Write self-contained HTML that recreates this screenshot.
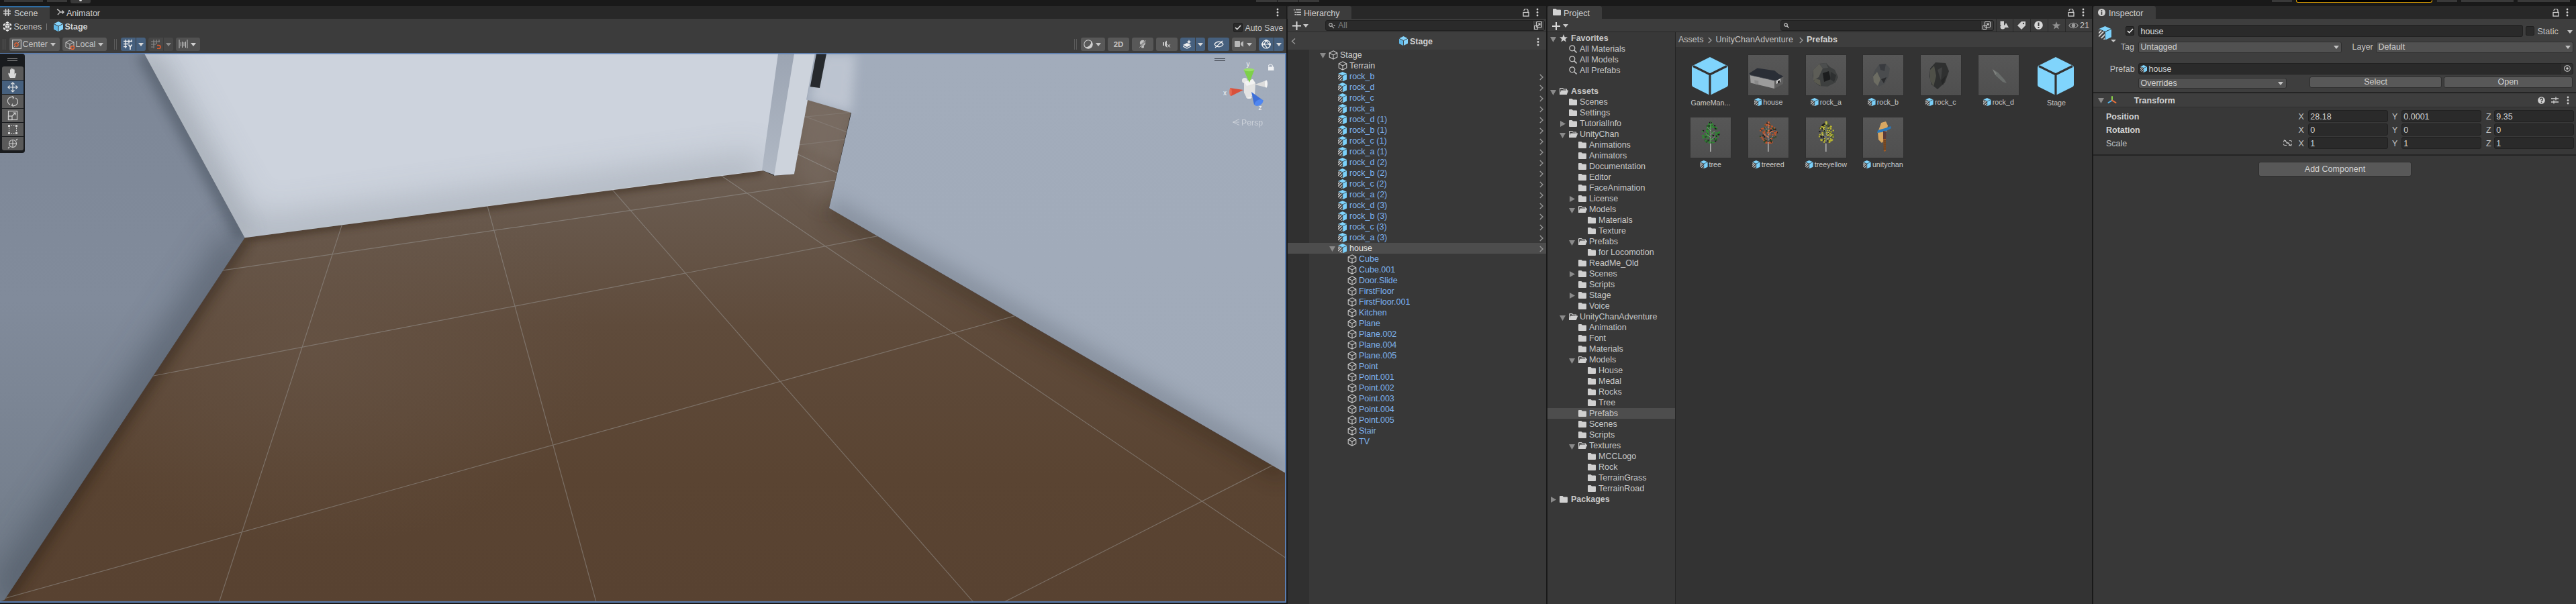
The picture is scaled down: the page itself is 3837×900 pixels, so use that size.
<!DOCTYPE html>
<html><head><meta charset="utf-8">
<style>
*{box-sizing:border-box;margin:0;padding:0}
html,body{width:3837px;height:900px;overflow:hidden;background:#191919;font-family:"Liberation Sans",sans-serif;font-size:12.5px;color:#c4c4c4}
.a{position:absolute}
.t{position:absolute;white-space:pre;line-height:16px}
.tabbar{position:absolute;top:9px;height:19px;background:#282828}
.tab{position:absolute;top:0;height:19px;background:#3c3c3c;border-radius:3px 3px 0 0}
.btn{position:absolute;background:#585858;border-radius:3px}
.field{position:absolute;background:#2a2a2a;border:1px solid #212121;border-radius:3px}
.pfb{color:#7eb6ff}
.dd{position:absolute;width:0;height:0;border-left:4px solid transparent;border-right:4px solid transparent;border-top:5px solid #c4c4c4}
</style></head><body>

<!-- top toolbar -->
<div class="a" style="left:0;top:0;width:3837px;height:9px;background:#191919"></div>
<div class="a" style="left:6px;top:0;width:58px;height:3px;background:#393939"></div>
<div class="a" style="left:70px;top:0;width:30px;height:3px;background:#393939"></div>
<div class="a" style="left:105px;top:0;width:30px;height:5px;background:#393939;border-radius:0 0 3px 3px"></div><div class="a" style="left:118px;top:0;width:4px;height:2px;background:#e8e8e8;border-radius:0 0 2px 2px"></div>
<div class="a" style="left:1871px;top:0;width:31px;height:3px;background:#393939"></div>
<div class="a" style="left:1903px;top:0;width:31px;height:3px;background:#393939"></div>
<div class="a" style="left:1935px;top:0;width:30px;height:3px;background:#393939"></div>
<div class="a" style="left:3384px;top:0;width:30px;height:3px;background:#393939"></div>
<div class="a" style="left:3420px;top:0;width:203px;height:4px;background:#000;border:1px solid #e0a000;border-top:none;border-radius:0 0 3px 3px"></div>
<div class="a" style="left:3630px;top:0;width:30px;height:3px;background:#393939"></div>
<div class="a" style="left:3666px;top:0;width:78px;height:3px;background:#393939"></div>
<div class="a" style="left:3750px;top:0;width:78px;height:3px;background:#393939"></div>

<!-- ============ SCENE PANEL ============ -->
<div class="a" style="left:0;top:9px;width:1916px;height:19px;background:#282828"></div>
<div class="a" style="left:0;top:28px;width:1916px;height:52px;background:#3c3c3c"></div>
<div class="a" style="left:0;top:9px;width:74px;height:19px;background:#3c3c3c;border-top:2px solid #2e6ca3"></div>
<svg class="a" style="left:5px;top:13px" width="11" height="11" viewBox="0 0 11 11" stroke="#d2d2d2" stroke-width="1.6"><path d="M3.5 0V11M7.5 0V11M0 3.5H11M0 7.5H11"/></svg>
<div class="t" style="left:21px;top:11.7px;color:#d2d2d2">Scene</div>
<svg class="a" style="left:84px;top:13px" width="12" height="10" viewBox="0 0 12 10" stroke="#c8c8c8" stroke-width="1.4" fill="none"><path d="M1 1C4 2 5 4 6 5H11M8.5 2.5L11 5L8.5 7.5M6 5C4.5 6 3.5 7 2 9"/></svg>
<div class="t" style="left:99px;top:11.7px;color:#d2d2d2">Animator</div>
<svg class="a" style="left:1901px;top:12px" width="4" height="13" viewBox="0 0 4 13" fill="#d2d2d2"><circle cx="2" cy="2" r="1.4"/><circle cx="2" cy="6.5" r="1.4"/><circle cx="2" cy="11" r="1.4"/></svg>
<!-- breadcrumb -->
<svg class="a" style="left:4px;top:32px" width="14" height="15" viewBox="0 0 14 15"><path fill="#ececec" d="M7 0L9.5 1.5L7 3L4.5 1.5Z M1 4L3.5 2.5V5.5L1 7Z M13 4L10.5 2.5V5.5L13 7Z M1 8.5L3.5 10V13L1 11.5Z M13 8.5L10.5 10V13L13 11.5Z M7 12L9.5 13.5L7 15L4.5 13.5Z"/><path fill="#ececec" d="M4.5 4.5L7 3.2L9.5 4.5L7 5.8Z M4 5.5L6.5 6.8V10L4 8.7Z M10 5.5L7.5 6.8V10L10 8.7Z"/><path fill="#ececec" d="M3.5 2.5L7 0.5L10.5 2.5L10.5 12.5L7 14.5L3.5 12.5Z" opacity="0.35"/></svg>
<div class="t" style="left:20.5px;top:28px;color:#c4c4c4;line-height:24px">Scenes</div>
<div class="a" style="left:69px;top:35px;width:1px;height:10px;background:#7a7a7a"></div>
<svg class="a" style="left:80px;top:32px" width="14" height="15" viewBox="0 0 14 15"><path fill="#86d4fb" d="M7 0L14 3.5V11.5L7 15L0 11.5V3.5Z"/><path fill="#5fb8e8" d="M0 3.5L7 7V15L0 11.5Z"/><path stroke="#3c3c3c" stroke-width="1" fill="none" d="M0 3.5L7 7L14 3.5M7 7V15"/></svg>
<div class="t" style="left:96.5px;top:28px;color:#d2d2d2;font-weight:bold;line-height:24px">Stage</div>
<div class="a" style="left:1837px;top:34px;width:14px;height:14px;background:#2a2a2a;border:1px solid #1f1f1f;border-radius:2px"></div>
<svg class="a" style="left:1839px;top:37px" width="10" height="8" viewBox="0 0 10 8" stroke="#e0e0e0" stroke-width="1.6" fill="none"><path d="M1 4L3.7 6.7L9 1"/></svg>
<div class="t" style="left:1854.5px;top:30px;color:#c4c4c4;line-height:24px;font-size:12.3px">Auto Save</div>
<!-- toolbar -->
<div class="a" style="left:4px;top:58px;width:1px;height:16px;background:#5a5a5a"></div>
<div class="a" style="left:7px;top:58px;width:1px;height:16px;background:#5a5a5a"></div>
<div class="btn" style="left:14px;top:56px;width:75px;height:20px"></div>
<svg class="a" style="left:18px;top:59px" width="14" height="14" viewBox="0 0 14 14"><rect x="0.6" y="0.6" width="12.8" height="12.8" fill="none" stroke="#c8c8c8" stroke-width="1.2"/><path d="M2 12L12 2" stroke="#c8c8c8" stroke-width="0.8"/><circle cx="6.5" cy="7.5" r="2.6" fill="#585858" stroke="#f06432" stroke-width="1.3"/></svg>
<div class="t" style="left:33.5px;top:58px;color:#c4c4c4">Center</div>
<div class="dd" style="left:75px;top:64px"></div>
<div class="btn" style="left:93px;top:56px;width:66px;height:20px"></div>
<svg class="a" style="left:97px;top:59px" width="15" height="15" viewBox="0 0 15 15" fill="none" stroke="#c8c8c8" stroke-width="1"><path d="M1 4L7 1L13 4V11L7 14L1 11Z M1 4L7 7L13 4M7 7V14"/><circle cx="11" cy="12" r="2.5" stroke="#f06432" stroke-width="1.4" fill="#585858"/></svg>
<div class="t" style="left:112.5px;top:58px;color:#c4c4c4">Local</div>
<div class="dd" style="left:146px;top:64px"></div>
<div class="a" style="left:170px;top:58px;width:1px;height:16px;background:#5a5a5a"></div>
<div class="a" style="left:173px;top:58px;width:1px;height:16px;background:#5a5a5a"></div>
<div class="btn" style="left:180px;top:56px;width:22px;height:20px;background:#46607e;border-radius:3px 0 0 3px"></div>
<div class="btn" style="left:203px;top:56px;width:14px;height:20px;background:#46607e;border-radius:0 3px 3px 0"></div>
<svg class="a" style="left:184px;top:59px" width="14" height="15" viewBox="0 0 14 15" stroke="#f0f0f0" stroke-width="1.3" fill="none"><path d="M3 0V13M8 0V6M12 0V3.5M0 2.5H13M0 6.5H7M0 10.5H5"/><path d="M7.5 7.5L10 11L12.5 7.5M10 11V15" stroke-width="1.6"/></svg>
<div class="dd" style="left:206px;top:64px;border-top-color:#d8d8d8"></div>
<div class="btn" style="left:221px;top:56px;width:22px;height:20px;background:#474747;border-radius:3px 0 0 3px"></div>
<div class="btn" style="left:244px;top:56px;width:14px;height:20px;background:#474747;border-radius:0 3px 3px 0"></div>
<svg class="a" style="left:225px;top:59px" width="15" height="14" viewBox="0 0 15 14" fill="none"><path d="M4 0V13M8 0V7M12 0V4M0 3H13M0 7H7M0 11H3" stroke="#8a8a8a" stroke-width="1.2"/><path d="M9 8.5H11.5A2.5 2.5 0 0 1 11.5 13.5H9" stroke="#e0592a" stroke-width="1.6"/></svg>
<div class="dd" style="left:247px;top:64px;border-top-color:#8a8a8a"></div>
<div class="btn" style="left:262px;top:56px;width:36px;height:20px;background:#515151"></div>
<svg class="a" style="left:266px;top:59px" width="14" height="14" viewBox="0 0 14 14" stroke="#d0d0d0" stroke-width="0.9"><path d="M1 0V13M13 0V13M3.5 4V10M5.5 3V12M8 4V10M10.5 3V12"/></svg>
<div class="dd" style="left:284px;top:64px;border-top-color:#d0d0d0"></div>

<div class="a" style="left:1600px;top:58px;width:1px;height:16px;background:#5a5a5a"></div>
<div class="a" style="left:1603px;top:58px;width:1px;height:16px;background:#5a5a5a"></div>
<div class="btn" style="left:1610px;top:56px;width:36px;height:20px"></div>
<svg class="a" style="left:1613.5px;top:59px" width="14" height="14" viewBox="0 0 14 14"><circle cx="7" cy="7" r="6.2" fill="none" stroke="#d0d0d0" stroke-width="1.1"/><path d="M11.4 2.6A6.2 6.2 0 0 1 2.6 11.4A8.5 8.5 0 0 0 11.4 2.6Z" fill="#d0d0d0"/></svg>
<div class="dd" style="left:1632px;top:64px"></div>
<div class="btn" style="left:1650px;top:56px;width:32px;height:20px"></div>
<div class="t" style="left:1650px;top:58px;width:32px;text-align:center;color:#c4c4c4;font-weight:bold;font-size:11.5px">2D</div>
<div class="btn" style="left:1686px;top:56px;width:32px;height:20px"></div>
<svg class="a" style="left:1696px;top:59px" width="12" height="14" viewBox="0 0 12 14"><circle cx="6" cy="5" r="4.2" fill="#c0c0c0"/><rect x="4" y="9" width="4" height="3.5" rx="1.5" fill="#c0c0c0"/><path d="M1 12L11 1" stroke="#585858" stroke-width="2"/><path d="M1.5 11.5L10.5 1.5" stroke="#c8c8c8" stroke-width="1"/></svg>
<div class="btn" style="left:1722px;top:56px;width:32px;height:20px"></div>
<svg class="a" style="left:1732px;top:60px" width="13" height="12" viewBox="0 0 13 12"><rect x="0" y="3" width="2" height="5" fill="#c8c8c8"/><path d="M3 3L6 0.5V10.5L3 8Z" fill="#c8c8c8"/><path d="M7 6L11 10.5M11 6L7 10.5" stroke="#c8c8c8" stroke-width="1.1"/></svg>
<div class="btn" style="left:1758px;top:56px;width:22px;height:20px;background:#46607e;border-radius:3px 0 0 3px"></div>
<div class="btn" style="left:1781px;top:56px;width:14px;height:20px;background:#46607e;border-radius:0 3px 3px 0"></div>
<svg class="a" style="left:1762px;top:59px" width="14" height="14" viewBox="0 0 14 14" fill="#f0f0f0"><path d="M0 8L6 5L12 8L6 11Z"/><path d="M0 10L6 13L12 10" stroke="#f0f0f0" stroke-width="1.3" fill="none"/><path d="M9 0L10 2.5L12.5 3.5L10 4.5L9 7L8 4.5L5.5 3.5L8 2.5Z"/></svg>
<div class="dd" style="left:1784px;top:64px;border-top-color:#d8d8d8"></div>
<div class="btn" style="left:1799px;top:56px;width:32px;height:20px;background:#46607e"></div>
<svg class="a" style="left:1808px;top:60px" width="15" height="12" viewBox="0 0 15 12" fill="none" stroke="#f0f0f0" stroke-width="1.3"><path d="M1 6C4 1 11 1 14 6C11 11 4 11 1 6Z"/><path d="M2 11L13 1"/></svg>
<div class="btn" style="left:1835px;top:56px;width:36px;height:20px"></div>
<svg class="a" style="left:1839px;top:60px" width="13" height="11" viewBox="0 0 13 11" fill="#b8b8b8"><rect x="0" y="1" width="8" height="9" rx="1"/><path d="M9 4L13 1V10L9 7Z"/></svg>
<div class="dd" style="left:1857px;top:64px"></div>
<div class="btn" style="left:1875px;top:56px;width:22px;height:20px;background:#46607e;border-radius:3px 0 0 3px"></div>
<div class="btn" style="left:1898px;top:56px;width:14px;height:20px;background:#46607e;border-radius:0 3px 3px 0"></div>
<svg class="a" style="left:1879px;top:59px" width="14" height="14" viewBox="0 0 14 14" fill="none" stroke="#f0f0f0" stroke-width="1.2"><circle cx="7" cy="7" r="6"/><path d="M1 7H13M7 1L4 7L9 13M7 1L11 7"/><circle cx="7" cy="1.5" r="1.3" fill="#f0f0f0"/><circle cx="1.5" cy="7" r="1.3" fill="#f0f0f0"/><circle cx="12.5" cy="7" r="1.3" fill="#f0f0f0"/></svg>
<div class="dd" style="left:1901px;top:64px;border-top-color:#d8d8d8"></div>
<svg class="a" style="left:0;top:0" width="1916" height="898" viewBox="0 0 1916 898">
<defs>
<clipPath id="sv"><rect x="0" y="80" width="1914" height="816"/></clipPath>
<clipPath id="cFloor"><polygon points="364.6,354.2 1134.9,253.6 1153,261.8 1183,259.5 1202,148.6 1267.4,167.4 1235,310 1914,704.6 1914,896 0,896 0,894 6.6,894"/></clipPath>
<clipPath id="cLW"><polygon points="0,80 215,80 364.6,354.2 6.6,894 0,896"/></clipPath>
<clipPath id="cBW"><polygon points="215,80 1159,80 1134.9,253.6 364.6,354.2"/></clipPath>
<clipPath id="cRW"><polygon points="1215.6,80 1914,80 1914,704.6 1235,310 1268,168 1202,148.6"/></clipPath>
<filter id="b8" x="-50%" y="-50%" width="200%" height="200%"><feGaussianBlur stdDeviation="8"/></filter>
<filter id="b14" x="-50%" y="-50%" width="200%" height="200%"><feGaussianBlur stdDeviation="14"/></filter>
<filter id="b25" x="-50%" y="-50%" width="200%" height="200%"><feGaussianBlur stdDeviation="25"/></filter>
<linearGradient id="gFloor" gradientUnits="userSpaceOnUse" x1="0" y1="150" x2="0" y2="896">
<stop offset="0" stop-color="#74675d"/><stop offset="0.2" stop-color="#695a4e"/><stop offset="0.45" stop-color="#5f4b3b"/><stop offset="0.75" stop-color="#5a4432"/><stop offset="1" stop-color="#584231"/>
</linearGradient>
<linearGradient id="gLW" gradientUnits="userSpaceOnUse" x1="0" y1="80" x2="0" y2="896">
<stop offset="0" stop-color="#7d8797"/><stop offset="0.45" stop-color="#818b9b"/><stop offset="1" stop-color="#707a87"/>
</linearGradient>
<linearGradient id="gRW" gradientUnits="userSpaceOnUse" x1="0" y1="80" x2="0" y2="697">
<stop offset="0" stop-color="#a2acbb"/><stop offset="1" stop-color="#a0aab9"/>
</linearGradient>
<linearGradient id="gPL" gradientUnits="userSpaceOnUse" x1="0" y1="80" x2="0" y2="262">
<stop offset="0" stop-color="#9ca5b3"/><stop offset="1" stop-color="#b0b8c4"/>
</linearGradient>
</defs>
<g clip-path="url(#sv)">
<polygon fill="url(#gFloor)" points="364.6,354.2 1134.9,253.6 1153,261.8 1183,259.5 1202,148.6 1267.4,167.4 1235,310 1914,704.6 1914,896 0,896 0,894 6.6,894"/>
<g clip-path="url(#cFloor)">
<polygon points="1202,148.6 1267.4,167.4 1235,310 1183,259.5" fill="#7a6d63" opacity="0.55" filter="url(#b14)"/>
<radialGradient id="gHi" gradientUnits="userSpaceOnUse" cx="470" cy="520" r="420" gradientTransform="translate(470 520) scale(1 0.7) translate(-470 -520)"><stop offset="0" stop-color="#6c5b4e" stop-opacity="0.45"/><stop offset="1" stop-color="#6c5b4e" stop-opacity="0"/></radialGradient><rect x="0" y="150" width="1000" height="746" fill="url(#gHi)"/>
<path d="M364.6,354.2 L6.6,894" stroke="#2e2218" stroke-width="22" opacity="0.45" filter="url(#b8)"/>
<filter id="b5" x="-50%" y="-50%" width="200%" height="200%"><feGaussianBlur stdDeviation="5"/></filter><path d="M364.6,354.2 L1134.9,253.6" stroke="#3a2a1e" stroke-width="14" opacity="0.5" filter="url(#b5)"/>
<path d="M1235,310 L1914,704.6" stroke="#2e2218" stroke-width="30" opacity="0.35" filter="url(#b14)"/>
<g stroke="#a8aaaa" stroke-width="1.2" fill="none" opacity="0.42">
<line x1="413.8" y1="196.2" x2="-4641.7" y2="5658.8"/>
<line x1="558.4" y1="184.5" x2="-187.9" y2="2477.0"/>
<line x1="689.4" y1="173.9" x2="1074.3" y2="1575.3"/>
<line x1="808.5" y1="164.3" x2="1670.6" y2="1149.3"/>
<line x1="917.4" y1="155.5" x2="2018.0" y2="901.1"/>
<line x1="1017.3" y1="147.4" x2="2245.5" y2="738.6"/>
<line x1="1109.3" y1="140.0" x2="2405.9" y2="624.0"/>
<line x1="1194.3" y1="133.1" x2="2525.1" y2="538.8"/>
<line x1="446.0" y1="209.6" x2="1266.3" y2="138.8"/>
<line x1="413.9" y1="252.8" x2="1341.6" y2="159.9"/>
<line x1="368.2" y1="314.0" x2="1437.2" y2="186.5"/>
<line x1="298.2" y1="407.9" x2="1562.5" y2="221.5"/>
<line x1="177.5" y1="569.9" x2="1733.9" y2="269.4"/>
<line x1="-80.8" y1="916.3" x2="1982.5" y2="338.8"/>
<line x1="-1022.6" y1="2179.5" x2="2376.0" y2="448.7"/>
</g>
<polygon points="1202,148.6 1267.4,167.4 1250,240 1190,215" fill="#7a6e65" opacity="0.55" filter="url(#b5)"/>
</g>
<polygon fill="url(#gLW)" points="0,80 215,80 364.6,354.2 6.6,894 0,896"/>
<g clip-path="url(#cLW)">
<path d="M215,80 L364.6,354.2" stroke="#3e4653" stroke-width="26" fill="none" opacity="0.45" filter="url(#b8)"/>
<path d="M364.6,354.2 L6.6,894" stroke="#3e4653" stroke-width="56" fill="none" opacity="0.5" filter="url(#b25)"/>
<path d="M0,80 L0,896" stroke="#5a6371" stroke-width="30" opacity="0.25" filter="url(#b14)"/>
</g>
<polygon fill="#cdd3dd" points="215,80 1162,80 1138,254 364.6,354.2"/>
<g clip-path="url(#cBW)">
<path d="M215,80 L364.6,354.2 L1134.9,253.6" stroke="#8c949f" stroke-width="50" fill="none" opacity="0.45" filter="url(#b25)"/><path d="M215,80 L364.6,354.2" stroke="#9aa0a9" stroke-width="24" fill="none" opacity="0.45" filter="url(#b14)"/>

</g>
<polygon fill="url(#gPL)" points="1159,80 1185,80 1155,261.6 1134.9,253.6"/>
<polygon fill="#cdd3dc" points="1183,80 1215.6,80 1183,259.5 1153,261.8"/>
<polygon fill="url(#gRW)" points="1213.6,80 1914,80 1914,704.6 1235,310 1268,168 1201,148.6"/>
<g clip-path="url(#cRW)">
<polygon points="1225,80 1275,80 1268,168 1205,150" fill="#c4cbd6" opacity="0.8" filter="url(#b8)"/>
<path d="M1235,310 L1914,704.6" stroke="#5e6774" stroke-width="34" fill="none" opacity="0.38" filter="url(#b14)"/>
</g>
<polygon fill="#26292d" points="1216,80 1231,80 1221,131 1206.8,129.3"/>
</g>
<rect x="0" y="79" width="1916" height="1.5" fill="#5a7db0"/>
<rect x="1914" y="79" width="2" height="819" fill="#5a7db0"/>
<rect x="0" y="896" width="1916" height="2" fill="#5a7db0"/>
</svg>

<!-- tool overlay -->
<div class="a" style="left:0;top:80px;width:37px;height:148px;background:#191b1e;border-radius:0 4px 4px 0"></div>
<div class="a" style="left:11px;top:87px;width:15px;height:1px;background:#8a8a8a"></div>
<div class="a" style="left:11px;top:90px;width:15px;height:1px;background:#8a8a8a"></div>
<div class="btn" style="left:3px;top:99px;width:32px;height:20px;background:#5a5a5a;border-radius:3px 3px 0 0"></div>
<div class="btn" style="left:3px;top:120px;width:32px;height:20px;background:#46607e;border-radius:0"></div>
<div class="btn" style="left:3px;top:141px;width:32px;height:20px;background:#5a5a5a;border-radius:0"></div>
<div class="btn" style="left:3px;top:162px;width:32px;height:20px;background:#5a5a5a;border-radius:0"></div>
<div class="btn" style="left:3px;top:183px;width:32px;height:20px;background:#5a5a5a;border-radius:0"></div>
<div class="btn" style="left:3px;top:204px;width:32px;height:20px;background:#5a5a5a;border-radius:0 0 3px 3px"></div>
<svg class="a" style="left:12px;top:101px" width="14" height="16" viewBox="0 0 14 16" fill="#d8d8d8"><path d="M3 15C1 12 0 9 0.5 8C1 7 2 7.5 2.5 8.5L3 9V3C3 2 4.5 2 4.5 3V7.5V1.5C4.5 0.5 6.3 0.5 6.3 1.5V7.5V2C6.3 1 8 1 8 2V7.5V3C8 2 9.7 2 9.7 3V10L10.5 8.5C11 7.5 12.5 7.8 12.3 9L10.5 15Z"/></svg>
<svg class="a" style="left:11px;top:122px" width="16" height="16" viewBox="0 0 16 16" fill="none" stroke="#e8e8e8" stroke-width="1.2"><path d="M8 1V15M1 8H15"/><path d="M5.5 3.5L8 1L10.5 3.5M5.5 12.5L8 15L10.5 12.5M3.5 5.5L1 8L3.5 10.5M12.5 5.5L15 8L12.5 10.5"/></svg>
<svg class="a" style="left:11px;top:143px" width="16" height="16" viewBox="0 0 16 16" fill="none" stroke="#d0d0d0" stroke-width="1.2"><path d="M4 13A6 6 0 0 1 9 2M12 3A6 6 0 0 1 7 14"/><path d="M7 0.5L9.5 2L8 4.5M9 15.5L6.5 14L8 11.5"/></svg>
<svg class="a" style="left:11px;top:164px" width="16" height="16" viewBox="0 0 16 16" fill="none" stroke="#d0d0d0" stroke-width="1.2"><rect x="1.5" y="1.5" width="13" height="13"/><rect x="1.5" y="9" width="5.5" height="5.5"/><path d="M7 9L12 4M8.5 4H12V7.5"/></svg>
<svg class="a" style="left:11px;top:185px" width="16" height="16" viewBox="0 0 16 16" fill="#d0d0d0"><rect x="1" y="1" width="3" height="3"/><rect x="12" y="1" width="3" height="3"/><rect x="1" y="12" width="3" height="3"/><rect x="12" y="12" width="3" height="3"/><path d="M2.5 5V11M13.5 5V11M5 2.5H11M5 13.5H11" stroke="#d0d0d0" stroke-width="1" stroke-dasharray="2 1.5"/></svg>
<svg class="a" style="left:11px;top:206px" width="16" height="16" viewBox="0 0 16 16" fill="none" stroke="#d0d0d0" stroke-width="1.1"><circle cx="8" cy="8" r="5.5"/><path d="M8 2V14M2 8H14"/><path d="M1 15L3 13M15 1L13 3" stroke-width="1.5"/></svg>
<!-- gizmo -->
<div class="a" style="left:1809px;top:87px;width:16px;height:1px;background:#3a3f48"></div>
<div class="a" style="left:1809px;top:90px;width:16px;height:1px;background:#3a3f48"></div>
<svg class="a" style="left:1816px;top:88px" width="90" height="105" viewBox="1816 88 90 105">
<path d="M1889.5 99A3 3 0 0 1 1895.5 99V100" fill="none" stroke="#eef0f3" stroke-width="1.2"/><rect x="1889" y="99.5" width="8.5" height="5.5" fill="#eef0f3"/>
<text x="1856.5" y="99" fill="#f4f4f4" font-size="10" font-family="Liberation Sans">y</text>
<text x="1822" y="141.5" fill="#f4f4f4" font-size="10" font-family="Liberation Sans">x</text>
<text x="1874.5" y="163.5" fill="#f4f4f4" font-size="10" font-family="Liberation Sans">z</text>
<ellipse cx="1854" cy="120" rx="4" ry="4" fill="#e6e6e6"/>
<path d="M1869 126L1887 119.5L1887 130.5Z" fill="#dcdcdc"/><ellipse cx="1886" cy="125" rx="2" ry="5.5" fill="#f4f4f4"/>
<path d="M1860 137L1857 146L1864 146Z" fill="#dcdcdc"/><ellipse cx="1860.5" cy="145" rx="4" ry="2" fill="#f0f0f0"/>
<path d="M1853 122L1866 118L1870 124L1869 142L1857 146L1853 138Z" fill="#e3e3e3"/>
<path d="M1853 122L1866 118L1870 124L1857 128Z" fill="#f2f2f2"/>
<path d="M1861 123L1852.5 104L1868.5 104Z" fill="#7ed04a"/><ellipse cx="1860.5" cy="104" rx="8" ry="2.2" fill="#9be06a"/>
<path d="M1852 134L1832 131L1834 143Z" fill="#d9503a"/><ellipse cx="1833" cy="137" rx="1.8" ry="6" fill="#e46a52"/>
<path d="M1864 137L1882 150L1868 156Z" fill="#3d6fd8"/><ellipse cx="1875" cy="153" rx="7" ry="4" transform="rotate(-30 1875 153)" fill="#4f86f0"/>
<text x="1849" y="186.5" fill="#d6dae0" opacity="0.8" font-size="12.3" font-family="Liberation Sans">Persp</text>
<path d="M1846 177.5L1836.5 182L1846 186.5M1836.5 182H1846" fill="none" stroke="#d6dae0" stroke-width="1" opacity="0.8"/>
</svg>

<!-- ============ HIERARCHY ============ -->
<div class="a" style="left:1917px;top:9px;width:386px;height:19px;background:#282828"></div>
<div class="a" style="left:1918px;top:9px;width:95px;height:19px;background:#3c3c3c;border-radius:3px 3px 0 0"></div>
<svg class="a" style="left:1927px;top:14px" width="11" height="9" viewBox="0 0 11 9" fill="#d2d2d2"><rect x="0" y="0" width="1.5" height="1.5"/><rect x="3" y="0" width="8" height="1.3"/><rect x="1.5" y="3.5" width="1.5" height="1.5"/><rect x="4" y="3.6" width="7" height="1.3"/><rect x="1.5" y="7" width="1.5" height="1.5"/><rect x="4" y="7.2" width="7" height="1.3"/></svg>
<div class="t" style="left:1942px;top:11.7px;color:#d2d2d2">Hierarchy</div>
<svg class="a" style="left:2268px;top:13px" width="10" height="12" viewBox="0 0 10 12" fill="none" stroke="#d2d2d2" stroke-width="1.3"><path d="M8 5V3A3 3 0 0 0 2 3"/><rect x="1" y="5.5" width="8" height="5.5"/></svg>
<svg class="a" style="left:2288px;top:12px" width="4" height="13" viewBox="0 0 4 13" fill="#d2d2d2"><circle cx="2" cy="2" r="1.4"/><circle cx="2" cy="6.5" r="1.4"/><circle cx="2" cy="11" r="1.4"/></svg>
<div class="a" style="left:1918px;top:28px;width:385px;height:20px;background:#3c3c3c"></div>
<div class="a" style="left:1918px;top:47px;width:385px;height:1px;background:#2a2a2a"></div>
<svg class="a" style="left:1925px;top:31.5px" width="13" height="13" viewBox="0 0 13 13" stroke="#d8d8d8" stroke-width="2"><path d="M6.5 0V13M0 6.5H13"/></svg>
<div class="dd" style="left:1941px;top:36px"></div>
<div class="a" style="left:1974px;top:30px;width:327px;height:16px;background:#2a2a2a;border:1px solid #212121;border-radius:3px"></div>
<svg class="a" style="left:1979px;top:34px" width="10" height="9" viewBox="0 0 10 9" fill="none" stroke="#b0b0b0" stroke-width="1.2"><circle cx="3" cy="3" r="2.3"/><path d="M4.8 4.8L8 8"/><path d="M7 3L10 3L8.5 5Z" fill="#b0b0b0" stroke="none"/></svg>
<div class="t" style="left:1993px;top:30px;color:#7d7d7d">All</div>
<div class="a" style="left:2282px;top:31px;width:18px;height:14px;background:#3a3a3a;border-left:1px solid #212121"></div>
<svg class="a" style="left:2285px;top:32px" width="12" height="12" viewBox="0 0 12 12" fill="none" stroke="#c8c8c8" stroke-width="1.1"><rect x="3.5" y="0.5" width="8" height="8" rx="1"/><rect x="0.5" y="6.5" width="5" height="5"/><path d="M5 7L9 3M6 3H9V6"/></svg>
<div class="a" style="left:1918px;top:48px;width:385px;height:26px;background:#3e3e3e"></div>
<svg class="a" style="left:1923px;top:57px" width="7" height="9" viewBox="0 0 7 9" fill="none" stroke="#9a9a9a" stroke-width="1.3"><path d="M6 0.5L1.5 4.5L6 8.5"/></svg>
<svg class="a" style="left:2084px;top:54px" width="13" height="14" viewBox="0 0 14 15"><path fill="#86d4fb" d="M7 0L14 3.5V11.5L7 15L0 11.5V3.5Z"/><path fill="#5fb8e8" d="M0 3.5L7 7V15L0 11.5Z"/><path stroke="#3e3e3e" stroke-width="1" fill="none" d="M0 3.5L7 7L14 3.5M7 7V15"/></svg>
<div class="t" style="left:2100px;top:54px;color:#d2d2d2;font-weight:bold">Stage</div>
<svg class="a" style="left:2289px;top:56px" width="4" height="13" viewBox="0 0 4 13" fill="#d2d2d2"><circle cx="2" cy="2" r="1.4"/><circle cx="2" cy="6.5" r="1.4"/><circle cx="2" cy="11" r="1.4"/></svg>
<svg width="0" height="0" style="position:absolute"><defs><clipPath id="pfLeft"><path d="M0 4.2L9.5 8.5V21L0 16.5Z"/></clipPath></defs></svg>
<div class="a" style="left:1918px;top:74px;width:385px;height:826px;background:#383838"></div>
<div class="a" style="left:1918px;top:74px;width:32px;height:826px;background:#303030"></div>

<svg class="a" style="left:1966px;top:79px" width="9" height="8" viewBox="0 0 9 8" fill="#8a8a8a"><path d="M0 0H9L4.5 8Z"/></svg>
<svg class="a" style="left:1979px;top:75px" width="14" height="14" viewBox="0 0 14 14" fill="none" stroke="#c8c8c8" stroke-width="1.1"><path d="M7 0.8L12.8 3.9V10.1L7 13.2L1.2 10.1V3.9Z M1.2 3.9L7 7L12.8 3.9M7 7V13.2"/></svg>
<div class="t" style="left:1996px;top:73.5px;color:#d2d2d2">Stage</div>
<svg class="a" style="left:1993px;top:91px" width="14" height="14" viewBox="0 0 14 14" fill="none" stroke="#c8c8c8" stroke-width="1.1"><path d="M7 0.8L12.8 3.9V10.1L7 13.2L1.2 10.1V3.9Z M1.2 3.9L7 7L12.8 3.9M7 7V13.2"/></svg>
<div class="t" style="left:2010px;top:89.5px;color:#d2d2d2">Terrain</div>
<svg class="a" style="left:1992.8px;top:106.8px" width="13.5" height="14.5" viewBox="0 0 19 21" preserveAspectRatio="none"><g clip-path="url(#pfLeft)" stroke="#cfcfcf" stroke-width="2"><path d="M-3 8.5L7 -1.5M-3 13.5L11 -0.5M-3 18.5L13 2.5M0 22L13 9M4 24L13 15"/></g><path d="M9.5 0L19 4.2L9.5 8.5L0 4.2Z" fill="#80d4fc"/><path d="M9.5 8.5L19 4.2V16.5L9.5 21Z" fill="#7bd0fa"/><path d="M0 4.2L9.5 8.5L19 4.2M9.5 8.5V21" stroke="#2a2a2a" stroke-width="0.9" fill="none"/></svg>
<div class="t" style="left:2010px;top:105.5px;color:#7eb4f2">rock_b</div>
<svg class="a" style="left:2293px;top:109.5px" width="6" height="10" viewBox="0 0 6 10" fill="none" stroke="#9a9a9a" stroke-width="1.3"><path d="M0.8 1L5 5L0.8 9"/></svg>
<svg class="a" style="left:1992.8px;top:122.8px" width="13.5" height="14.5" viewBox="0 0 19 21" preserveAspectRatio="none"><g clip-path="url(#pfLeft)" stroke="#cfcfcf" stroke-width="2"><path d="M-3 8.5L7 -1.5M-3 13.5L11 -0.5M-3 18.5L13 2.5M0 22L13 9M4 24L13 15"/></g><path d="M9.5 0L19 4.2L9.5 8.5L0 4.2Z" fill="#80d4fc"/><path d="M9.5 8.5L19 4.2V16.5L9.5 21Z" fill="#7bd0fa"/><path d="M0 4.2L9.5 8.5L19 4.2M9.5 8.5V21" stroke="#2a2a2a" stroke-width="0.9" fill="none"/></svg>
<div class="t" style="left:2010px;top:121.5px;color:#7eb4f2">rock_d</div>
<svg class="a" style="left:2293px;top:125.5px" width="6" height="10" viewBox="0 0 6 10" fill="none" stroke="#9a9a9a" stroke-width="1.3"><path d="M0.8 1L5 5L0.8 9"/></svg>
<svg class="a" style="left:1992.8px;top:138.8px" width="13.5" height="14.5" viewBox="0 0 19 21" preserveAspectRatio="none"><g clip-path="url(#pfLeft)" stroke="#cfcfcf" stroke-width="2"><path d="M-3 8.5L7 -1.5M-3 13.5L11 -0.5M-3 18.5L13 2.5M0 22L13 9M4 24L13 15"/></g><path d="M9.5 0L19 4.2L9.5 8.5L0 4.2Z" fill="#80d4fc"/><path d="M9.5 8.5L19 4.2V16.5L9.5 21Z" fill="#7bd0fa"/><path d="M0 4.2L9.5 8.5L19 4.2M9.5 8.5V21" stroke="#2a2a2a" stroke-width="0.9" fill="none"/></svg>
<div class="t" style="left:2010px;top:137.5px;color:#7eb4f2">rock_c</div>
<svg class="a" style="left:2293px;top:141.5px" width="6" height="10" viewBox="0 0 6 10" fill="none" stroke="#9a9a9a" stroke-width="1.3"><path d="M0.8 1L5 5L0.8 9"/></svg>
<svg class="a" style="left:1992.8px;top:154.8px" width="13.5" height="14.5" viewBox="0 0 19 21" preserveAspectRatio="none"><g clip-path="url(#pfLeft)" stroke="#cfcfcf" stroke-width="2"><path d="M-3 8.5L7 -1.5M-3 13.5L11 -0.5M-3 18.5L13 2.5M0 22L13 9M4 24L13 15"/></g><path d="M9.5 0L19 4.2L9.5 8.5L0 4.2Z" fill="#80d4fc"/><path d="M9.5 8.5L19 4.2V16.5L9.5 21Z" fill="#7bd0fa"/><path d="M0 4.2L9.5 8.5L19 4.2M9.5 8.5V21" stroke="#2a2a2a" stroke-width="0.9" fill="none"/></svg>
<div class="t" style="left:2010px;top:153.5px;color:#7eb4f2">rock_a</div>
<svg class="a" style="left:2293px;top:157.5px" width="6" height="10" viewBox="0 0 6 10" fill="none" stroke="#9a9a9a" stroke-width="1.3"><path d="M0.8 1L5 5L0.8 9"/></svg>
<svg class="a" style="left:1992.8px;top:170.8px" width="13.5" height="14.5" viewBox="0 0 19 21" preserveAspectRatio="none"><g clip-path="url(#pfLeft)" stroke="#cfcfcf" stroke-width="2"><path d="M-3 8.5L7 -1.5M-3 13.5L11 -0.5M-3 18.5L13 2.5M0 22L13 9M4 24L13 15"/></g><path d="M9.5 0L19 4.2L9.5 8.5L0 4.2Z" fill="#80d4fc"/><path d="M9.5 8.5L19 4.2V16.5L9.5 21Z" fill="#7bd0fa"/><path d="M0 4.2L9.5 8.5L19 4.2M9.5 8.5V21" stroke="#2a2a2a" stroke-width="0.9" fill="none"/></svg>
<div class="t" style="left:2010px;top:169.5px;color:#7eb4f2">rock_d (1)</div>
<svg class="a" style="left:2293px;top:173.5px" width="6" height="10" viewBox="0 0 6 10" fill="none" stroke="#9a9a9a" stroke-width="1.3"><path d="M0.8 1L5 5L0.8 9"/></svg>
<svg class="a" style="left:1992.8px;top:186.8px" width="13.5" height="14.5" viewBox="0 0 19 21" preserveAspectRatio="none"><g clip-path="url(#pfLeft)" stroke="#cfcfcf" stroke-width="2"><path d="M-3 8.5L7 -1.5M-3 13.5L11 -0.5M-3 18.5L13 2.5M0 22L13 9M4 24L13 15"/></g><path d="M9.5 0L19 4.2L9.5 8.5L0 4.2Z" fill="#80d4fc"/><path d="M9.5 8.5L19 4.2V16.5L9.5 21Z" fill="#7bd0fa"/><path d="M0 4.2L9.5 8.5L19 4.2M9.5 8.5V21" stroke="#2a2a2a" stroke-width="0.9" fill="none"/></svg>
<div class="t" style="left:2010px;top:185.5px;color:#7eb4f2">rock_b (1)</div>
<svg class="a" style="left:2293px;top:189.5px" width="6" height="10" viewBox="0 0 6 10" fill="none" stroke="#9a9a9a" stroke-width="1.3"><path d="M0.8 1L5 5L0.8 9"/></svg>
<svg class="a" style="left:1992.8px;top:202.8px" width="13.5" height="14.5" viewBox="0 0 19 21" preserveAspectRatio="none"><g clip-path="url(#pfLeft)" stroke="#cfcfcf" stroke-width="2"><path d="M-3 8.5L7 -1.5M-3 13.5L11 -0.5M-3 18.5L13 2.5M0 22L13 9M4 24L13 15"/></g><path d="M9.5 0L19 4.2L9.5 8.5L0 4.2Z" fill="#80d4fc"/><path d="M9.5 8.5L19 4.2V16.5L9.5 21Z" fill="#7bd0fa"/><path d="M0 4.2L9.5 8.5L19 4.2M9.5 8.5V21" stroke="#2a2a2a" stroke-width="0.9" fill="none"/></svg>
<div class="t" style="left:2010px;top:201.5px;color:#7eb4f2">rock_c (1)</div>
<svg class="a" style="left:2293px;top:205.5px" width="6" height="10" viewBox="0 0 6 10" fill="none" stroke="#9a9a9a" stroke-width="1.3"><path d="M0.8 1L5 5L0.8 9"/></svg>
<svg class="a" style="left:1992.8px;top:218.8px" width="13.5" height="14.5" viewBox="0 0 19 21" preserveAspectRatio="none"><g clip-path="url(#pfLeft)" stroke="#cfcfcf" stroke-width="2"><path d="M-3 8.5L7 -1.5M-3 13.5L11 -0.5M-3 18.5L13 2.5M0 22L13 9M4 24L13 15"/></g><path d="M9.5 0L19 4.2L9.5 8.5L0 4.2Z" fill="#80d4fc"/><path d="M9.5 8.5L19 4.2V16.5L9.5 21Z" fill="#7bd0fa"/><path d="M0 4.2L9.5 8.5L19 4.2M9.5 8.5V21" stroke="#2a2a2a" stroke-width="0.9" fill="none"/></svg>
<div class="t" style="left:2010px;top:217.5px;color:#7eb4f2">rock_a (1)</div>
<svg class="a" style="left:2293px;top:221.5px" width="6" height="10" viewBox="0 0 6 10" fill="none" stroke="#9a9a9a" stroke-width="1.3"><path d="M0.8 1L5 5L0.8 9"/></svg>
<svg class="a" style="left:1992.8px;top:234.8px" width="13.5" height="14.5" viewBox="0 0 19 21" preserveAspectRatio="none"><g clip-path="url(#pfLeft)" stroke="#cfcfcf" stroke-width="2"><path d="M-3 8.5L7 -1.5M-3 13.5L11 -0.5M-3 18.5L13 2.5M0 22L13 9M4 24L13 15"/></g><path d="M9.5 0L19 4.2L9.5 8.5L0 4.2Z" fill="#80d4fc"/><path d="M9.5 8.5L19 4.2V16.5L9.5 21Z" fill="#7bd0fa"/><path d="M0 4.2L9.5 8.5L19 4.2M9.5 8.5V21" stroke="#2a2a2a" stroke-width="0.9" fill="none"/></svg>
<div class="t" style="left:2010px;top:233.5px;color:#7eb4f2">rock_d (2)</div>
<svg class="a" style="left:2293px;top:237.5px" width="6" height="10" viewBox="0 0 6 10" fill="none" stroke="#9a9a9a" stroke-width="1.3"><path d="M0.8 1L5 5L0.8 9"/></svg>
<svg class="a" style="left:1992.8px;top:250.8px" width="13.5" height="14.5" viewBox="0 0 19 21" preserveAspectRatio="none"><g clip-path="url(#pfLeft)" stroke="#cfcfcf" stroke-width="2"><path d="M-3 8.5L7 -1.5M-3 13.5L11 -0.5M-3 18.5L13 2.5M0 22L13 9M4 24L13 15"/></g><path d="M9.5 0L19 4.2L9.5 8.5L0 4.2Z" fill="#80d4fc"/><path d="M9.5 8.5L19 4.2V16.5L9.5 21Z" fill="#7bd0fa"/><path d="M0 4.2L9.5 8.5L19 4.2M9.5 8.5V21" stroke="#2a2a2a" stroke-width="0.9" fill="none"/></svg>
<div class="t" style="left:2010px;top:249.5px;color:#7eb4f2">rock_b (2)</div>
<svg class="a" style="left:2293px;top:253.5px" width="6" height="10" viewBox="0 0 6 10" fill="none" stroke="#9a9a9a" stroke-width="1.3"><path d="M0.8 1L5 5L0.8 9"/></svg>
<svg class="a" style="left:1992.8px;top:266.8px" width="13.5" height="14.5" viewBox="0 0 19 21" preserveAspectRatio="none"><g clip-path="url(#pfLeft)" stroke="#cfcfcf" stroke-width="2"><path d="M-3 8.5L7 -1.5M-3 13.5L11 -0.5M-3 18.5L13 2.5M0 22L13 9M4 24L13 15"/></g><path d="M9.5 0L19 4.2L9.5 8.5L0 4.2Z" fill="#80d4fc"/><path d="M9.5 8.5L19 4.2V16.5L9.5 21Z" fill="#7bd0fa"/><path d="M0 4.2L9.5 8.5L19 4.2M9.5 8.5V21" stroke="#2a2a2a" stroke-width="0.9" fill="none"/></svg>
<div class="t" style="left:2010px;top:265.5px;color:#7eb4f2">rock_c (2)</div>
<svg class="a" style="left:2293px;top:269.5px" width="6" height="10" viewBox="0 0 6 10" fill="none" stroke="#9a9a9a" stroke-width="1.3"><path d="M0.8 1L5 5L0.8 9"/></svg>
<svg class="a" style="left:1992.8px;top:282.8px" width="13.5" height="14.5" viewBox="0 0 19 21" preserveAspectRatio="none"><g clip-path="url(#pfLeft)" stroke="#cfcfcf" stroke-width="2"><path d="M-3 8.5L7 -1.5M-3 13.5L11 -0.5M-3 18.5L13 2.5M0 22L13 9M4 24L13 15"/></g><path d="M9.5 0L19 4.2L9.5 8.5L0 4.2Z" fill="#80d4fc"/><path d="M9.5 8.5L19 4.2V16.5L9.5 21Z" fill="#7bd0fa"/><path d="M0 4.2L9.5 8.5L19 4.2M9.5 8.5V21" stroke="#2a2a2a" stroke-width="0.9" fill="none"/></svg>
<div class="t" style="left:2010px;top:281.5px;color:#7eb4f2">rock_a (2)</div>
<svg class="a" style="left:2293px;top:285.5px" width="6" height="10" viewBox="0 0 6 10" fill="none" stroke="#9a9a9a" stroke-width="1.3"><path d="M0.8 1L5 5L0.8 9"/></svg>
<svg class="a" style="left:1992.8px;top:298.8px" width="13.5" height="14.5" viewBox="0 0 19 21" preserveAspectRatio="none"><g clip-path="url(#pfLeft)" stroke="#cfcfcf" stroke-width="2"><path d="M-3 8.5L7 -1.5M-3 13.5L11 -0.5M-3 18.5L13 2.5M0 22L13 9M4 24L13 15"/></g><path d="M9.5 0L19 4.2L9.5 8.5L0 4.2Z" fill="#80d4fc"/><path d="M9.5 8.5L19 4.2V16.5L9.5 21Z" fill="#7bd0fa"/><path d="M0 4.2L9.5 8.5L19 4.2M9.5 8.5V21" stroke="#2a2a2a" stroke-width="0.9" fill="none"/></svg>
<div class="t" style="left:2010px;top:297.5px;color:#7eb4f2">rock_d (3)</div>
<svg class="a" style="left:2293px;top:301.5px" width="6" height="10" viewBox="0 0 6 10" fill="none" stroke="#9a9a9a" stroke-width="1.3"><path d="M0.8 1L5 5L0.8 9"/></svg>
<svg class="a" style="left:1992.8px;top:314.8px" width="13.5" height="14.5" viewBox="0 0 19 21" preserveAspectRatio="none"><g clip-path="url(#pfLeft)" stroke="#cfcfcf" stroke-width="2"><path d="M-3 8.5L7 -1.5M-3 13.5L11 -0.5M-3 18.5L13 2.5M0 22L13 9M4 24L13 15"/></g><path d="M9.5 0L19 4.2L9.5 8.5L0 4.2Z" fill="#80d4fc"/><path d="M9.5 8.5L19 4.2V16.5L9.5 21Z" fill="#7bd0fa"/><path d="M0 4.2L9.5 8.5L19 4.2M9.5 8.5V21" stroke="#2a2a2a" stroke-width="0.9" fill="none"/></svg>
<div class="t" style="left:2010px;top:313.5px;color:#7eb4f2">rock_b (3)</div>
<svg class="a" style="left:2293px;top:317.5px" width="6" height="10" viewBox="0 0 6 10" fill="none" stroke="#9a9a9a" stroke-width="1.3"><path d="M0.8 1L5 5L0.8 9"/></svg>
<svg class="a" style="left:1992.8px;top:330.8px" width="13.5" height="14.5" viewBox="0 0 19 21" preserveAspectRatio="none"><g clip-path="url(#pfLeft)" stroke="#cfcfcf" stroke-width="2"><path d="M-3 8.5L7 -1.5M-3 13.5L11 -0.5M-3 18.5L13 2.5M0 22L13 9M4 24L13 15"/></g><path d="M9.5 0L19 4.2L9.5 8.5L0 4.2Z" fill="#80d4fc"/><path d="M9.5 8.5L19 4.2V16.5L9.5 21Z" fill="#7bd0fa"/><path d="M0 4.2L9.5 8.5L19 4.2M9.5 8.5V21" stroke="#2a2a2a" stroke-width="0.9" fill="none"/></svg>
<div class="t" style="left:2010px;top:329.5px;color:#7eb4f2">rock_c (3)</div>
<svg class="a" style="left:2293px;top:333.5px" width="6" height="10" viewBox="0 0 6 10" fill="none" stroke="#9a9a9a" stroke-width="1.3"><path d="M0.8 1L5 5L0.8 9"/></svg>
<svg class="a" style="left:1992.8px;top:346.8px" width="13.5" height="14.5" viewBox="0 0 19 21" preserveAspectRatio="none"><g clip-path="url(#pfLeft)" stroke="#cfcfcf" stroke-width="2"><path d="M-3 8.5L7 -1.5M-3 13.5L11 -0.5M-3 18.5L13 2.5M0 22L13 9M4 24L13 15"/></g><path d="M9.5 0L19 4.2L9.5 8.5L0 4.2Z" fill="#80d4fc"/><path d="M9.5 8.5L19 4.2V16.5L9.5 21Z" fill="#7bd0fa"/><path d="M0 4.2L9.5 8.5L19 4.2M9.5 8.5V21" stroke="#2a2a2a" stroke-width="0.9" fill="none"/></svg>
<div class="t" style="left:2010px;top:345.5px;color:#7eb4f2">rock_a (3)</div>
<svg class="a" style="left:2293px;top:349.5px" width="6" height="10" viewBox="0 0 6 10" fill="none" stroke="#9a9a9a" stroke-width="1.3"><path d="M0.8 1L5 5L0.8 9"/></svg>
<div class="a" style="left:1918px;top:362px;width:385px;height:16px;background:#4d4d4d"></div>
<svg class="a" style="left:1980px;top:367px" width="9" height="8" viewBox="0 0 9 8" fill="#8a8a8a"><path d="M0 0H9L4.5 8Z"/></svg>
<svg class="a" style="left:1992.8px;top:362.8px" width="13.5" height="14.5" viewBox="0 0 19 21" preserveAspectRatio="none"><g clip-path="url(#pfLeft)" stroke="#cfcfcf" stroke-width="2"><path d="M-3 8.5L7 -1.5M-3 13.5L11 -0.5M-3 18.5L13 2.5M0 22L13 9M4 24L13 15"/></g><path d="M9.5 0L19 4.2L9.5 8.5L0 4.2Z" fill="#80d4fc"/><path d="M9.5 8.5L19 4.2V16.5L9.5 21Z" fill="#7bd0fa"/><path d="M0 4.2L9.5 8.5L19 4.2M9.5 8.5V21" stroke="#2a2a2a" stroke-width="0.9" fill="none"/></svg>
<div class="t" style="left:2010px;top:361.5px;color:#e4e4e4">house</div>
<svg class="a" style="left:2293px;top:365.5px" width="6" height="10" viewBox="0 0 6 10" fill="none" stroke="#9a9a9a" stroke-width="1.3"><path d="M0.8 1L5 5L0.8 9"/></svg>
<svg class="a" style="left:2007px;top:379px" width="14" height="14" viewBox="0 0 14 14" fill="none" stroke="#c8c8c8" stroke-width="1.1"><path d="M7 0.8L12.8 3.9V10.1L7 13.2L1.2 10.1V3.9Z M1.2 3.9L7 7L12.8 3.9M7 7V13.2"/></svg>
<div class="t" style="left:2024px;top:377.5px;color:#7eb4f2">Cube</div>
<svg class="a" style="left:2007px;top:395px" width="14" height="14" viewBox="0 0 14 14" fill="none" stroke="#c8c8c8" stroke-width="1.1"><path d="M7 0.8L12.8 3.9V10.1L7 13.2L1.2 10.1V3.9Z M1.2 3.9L7 7L12.8 3.9M7 7V13.2"/></svg>
<div class="t" style="left:2024px;top:393.5px;color:#7eb4f2">Cube.001</div>
<svg class="a" style="left:2007px;top:411px" width="14" height="14" viewBox="0 0 14 14" fill="none" stroke="#c8c8c8" stroke-width="1.1"><path d="M7 0.8L12.8 3.9V10.1L7 13.2L1.2 10.1V3.9Z M1.2 3.9L7 7L12.8 3.9M7 7V13.2"/></svg>
<div class="t" style="left:2024px;top:409.5px;color:#7eb4f2">Door.Slide</div>
<svg class="a" style="left:2007px;top:427px" width="14" height="14" viewBox="0 0 14 14" fill="none" stroke="#c8c8c8" stroke-width="1.1"><path d="M7 0.8L12.8 3.9V10.1L7 13.2L1.2 10.1V3.9Z M1.2 3.9L7 7L12.8 3.9M7 7V13.2"/></svg>
<div class="t" style="left:2024px;top:425.5px;color:#7eb4f2">FirstFloor</div>
<svg class="a" style="left:2007px;top:443px" width="14" height="14" viewBox="0 0 14 14" fill="none" stroke="#c8c8c8" stroke-width="1.1"><path d="M7 0.8L12.8 3.9V10.1L7 13.2L1.2 10.1V3.9Z M1.2 3.9L7 7L12.8 3.9M7 7V13.2"/></svg>
<div class="t" style="left:2024px;top:441.5px;color:#7eb4f2">FirstFloor.001</div>
<svg class="a" style="left:2007px;top:459px" width="14" height="14" viewBox="0 0 14 14" fill="none" stroke="#c8c8c8" stroke-width="1.1"><path d="M7 0.8L12.8 3.9V10.1L7 13.2L1.2 10.1V3.9Z M1.2 3.9L7 7L12.8 3.9M7 7V13.2"/></svg>
<div class="t" style="left:2024px;top:457.5px;color:#7eb4f2">Kitchen</div>
<svg class="a" style="left:2007px;top:475px" width="14" height="14" viewBox="0 0 14 14" fill="none" stroke="#c8c8c8" stroke-width="1.1"><path d="M7 0.8L12.8 3.9V10.1L7 13.2L1.2 10.1V3.9Z M1.2 3.9L7 7L12.8 3.9M7 7V13.2"/></svg>
<div class="t" style="left:2024px;top:473.5px;color:#7eb4f2">Plane</div>
<svg class="a" style="left:2007px;top:491px" width="14" height="14" viewBox="0 0 14 14" fill="none" stroke="#c8c8c8" stroke-width="1.1"><path d="M7 0.8L12.8 3.9V10.1L7 13.2L1.2 10.1V3.9Z M1.2 3.9L7 7L12.8 3.9M7 7V13.2"/></svg>
<div class="t" style="left:2024px;top:489.5px;color:#7eb4f2">Plane.002</div>
<svg class="a" style="left:2007px;top:507px" width="14" height="14" viewBox="0 0 14 14" fill="none" stroke="#c8c8c8" stroke-width="1.1"><path d="M7 0.8L12.8 3.9V10.1L7 13.2L1.2 10.1V3.9Z M1.2 3.9L7 7L12.8 3.9M7 7V13.2"/></svg>
<div class="t" style="left:2024px;top:505.5px;color:#7eb4f2">Plane.004</div>
<svg class="a" style="left:2007px;top:523px" width="14" height="14" viewBox="0 0 14 14" fill="none" stroke="#c8c8c8" stroke-width="1.1"><path d="M7 0.8L12.8 3.9V10.1L7 13.2L1.2 10.1V3.9Z M1.2 3.9L7 7L12.8 3.9M7 7V13.2"/></svg>
<div class="t" style="left:2024px;top:521.5px;color:#7eb4f2">Plane.005</div>
<svg class="a" style="left:2007px;top:539px" width="14" height="14" viewBox="0 0 14 14" fill="none" stroke="#c8c8c8" stroke-width="1.1"><path d="M7 0.8L12.8 3.9V10.1L7 13.2L1.2 10.1V3.9Z M1.2 3.9L7 7L12.8 3.9M7 7V13.2"/></svg>
<div class="t" style="left:2024px;top:537.5px;color:#7eb4f2">Point</div>
<svg class="a" style="left:2007px;top:555px" width="14" height="14" viewBox="0 0 14 14" fill="none" stroke="#c8c8c8" stroke-width="1.1"><path d="M7 0.8L12.8 3.9V10.1L7 13.2L1.2 10.1V3.9Z M1.2 3.9L7 7L12.8 3.9M7 7V13.2"/></svg>
<div class="t" style="left:2024px;top:553.5px;color:#7eb4f2">Point.001</div>
<svg class="a" style="left:2007px;top:571px" width="14" height="14" viewBox="0 0 14 14" fill="none" stroke="#c8c8c8" stroke-width="1.1"><path d="M7 0.8L12.8 3.9V10.1L7 13.2L1.2 10.1V3.9Z M1.2 3.9L7 7L12.8 3.9M7 7V13.2"/></svg>
<div class="t" style="left:2024px;top:569.5px;color:#7eb4f2">Point.002</div>
<svg class="a" style="left:2007px;top:587px" width="14" height="14" viewBox="0 0 14 14" fill="none" stroke="#c8c8c8" stroke-width="1.1"><path d="M7 0.8L12.8 3.9V10.1L7 13.2L1.2 10.1V3.9Z M1.2 3.9L7 7L12.8 3.9M7 7V13.2"/></svg>
<div class="t" style="left:2024px;top:585.5px;color:#7eb4f2">Point.003</div>
<svg class="a" style="left:2007px;top:603px" width="14" height="14" viewBox="0 0 14 14" fill="none" stroke="#c8c8c8" stroke-width="1.1"><path d="M7 0.8L12.8 3.9V10.1L7 13.2L1.2 10.1V3.9Z M1.2 3.9L7 7L12.8 3.9M7 7V13.2"/></svg>
<div class="t" style="left:2024px;top:601.5px;color:#7eb4f2">Point.004</div>
<svg class="a" style="left:2007px;top:619px" width="14" height="14" viewBox="0 0 14 14" fill="none" stroke="#c8c8c8" stroke-width="1.1"><path d="M7 0.8L12.8 3.9V10.1L7 13.2L1.2 10.1V3.9Z M1.2 3.9L7 7L12.8 3.9M7 7V13.2"/></svg>
<div class="t" style="left:2024px;top:617.5px;color:#7eb4f2">Point.005</div>
<svg class="a" style="left:2007px;top:635px" width="14" height="14" viewBox="0 0 14 14" fill="none" stroke="#c8c8c8" stroke-width="1.1"><path d="M7 0.8L12.8 3.9V10.1L7 13.2L1.2 10.1V3.9Z M1.2 3.9L7 7L12.8 3.9M7 7V13.2"/></svg>
<div class="t" style="left:2024px;top:633.5px;color:#7eb4f2">Stair</div>
<svg class="a" style="left:2007px;top:651px" width="14" height="14" viewBox="0 0 14 14" fill="none" stroke="#c8c8c8" stroke-width="1.1"><path d="M7 0.8L12.8 3.9V10.1L7 13.2L1.2 10.1V3.9Z M1.2 3.9L7 7L12.8 3.9M7 7V13.2"/></svg>
<div class="t" style="left:2024px;top:649.5px;color:#7eb4f2">TV</div>
<div class="a" style="left:2303px;top:9px;width:2px;height:891px;background:#191919"></div>
<!-- ============ PROJECT ============ -->
<div class="a" style="left:2305px;top:9px;width:811px;height:19px;background:#282828"></div>
<div class="a" style="left:2305px;top:9px;width:81px;height:19px;background:#3c3c3c;border-radius:3px 3px 0 0"></div>
<svg class="a" style="left:2313px;top:13px" width="12" height="10" viewBox="0 0 12 10" fill="#d2d2d2"><path d="M0 1A1 1 0 0 1 1 0H4.5L6 1.5H11A1 1 0 0 1 12 2.5V9A1 1 0 0 1 11 10H1A1 1 0 0 1 0 9Z"/></svg>
<div class="t" style="left:2329px;top:11.7px;color:#d2d2d2">Project</div>
<svg class="a" style="left:3080px;top:13px" width="10" height="12" viewBox="0 0 10 12" fill="none" stroke="#d2d2d2" stroke-width="1.3"><path d="M8 5V3A3 3 0 0 0 2 3"/><rect x="1" y="5.5" width="8" height="5.5"/></svg>
<svg class="a" style="left:3101px;top:12px" width="4" height="13" viewBox="0 0 4 13" fill="#d2d2d2"><circle cx="2" cy="2" r="1.4"/><circle cx="2" cy="6.5" r="1.4"/><circle cx="2" cy="11" r="1.4"/></svg>
<div class="a" style="left:2305px;top:28px;width:811px;height:20px;background:#3c3c3c"></div>
<div class="a" style="left:2305px;top:47px;width:811px;height:1px;background:#242424"></div>
<svg class="a" style="left:2312px;top:32.5px" width="12" height="12" viewBox="0 0 12 12" stroke="#d8d8d8" stroke-width="2"><path d="M6 0V12M0 6H12"/></svg>
<div class="dd" style="left:2328px;top:36px"></div>
<div class="a" style="left:2652px;top:30px;width:318px;height:16px;background:#2a2a2a;border:1px solid #212121;border-radius:3px"></div>
<svg class="a" style="left:2657px;top:34px" width="8" height="8" viewBox="0 0 8 8" fill="none" stroke="#c0c0c0" stroke-width="1.3"><circle cx="3" cy="3" r="2.2"/><path d="M4.7 4.7L7.5 7.5"/></svg>
<div class="a" style="left:2950px;top:31px;width:19px;height:14px;background:#3a3a3a;border-left:1px solid #212121;border-radius:0 3px 3px 0"></div>
<svg class="a" style="left:2953px;top:32px" width="12" height="12" viewBox="0 0 12 12" fill="none" stroke="#c8c8c8" stroke-width="1.1"><rect x="3.5" y="0.5" width="8" height="8" rx="1"/><rect x="0.5" y="6.5" width="5" height="5"/><path d="M5 7L9 3M6 3H9V6"/></svg>
<div class="a" style="left:2973px;top:28px;width:1px;height:19px;background:#2a2a2a"></div>
<div class="a" style="left:2998px;top:28px;width:1px;height:19px;background:#2a2a2a"></div>
<div class="a" style="left:3024px;top:28px;width:1px;height:19px;background:#2a2a2a"></div>
<div class="a" style="left:3050px;top:28px;width:1px;height:19px;background:#2a2a2a"></div>
<div class="a" style="left:3076px;top:28px;width:1px;height:19px;background:#2a2a2a"></div>
<svg class="a" style="left:2979px;top:31px" width="13" height="13" viewBox="0 0 13 13" fill="#d0d0d0"><circle cx="4" cy="9" r="3.5"/><rect x="0.5" y="0.5" width="5.5" height="5.5"/><path d="M9 3L13 10H5Z"/></svg>
<svg class="a" style="left:3005px;top:32px" width="12" height="12" viewBox="0 0 12 12" fill="#d0d0d0"><path d="M6 0H12V6L6 12L0 6Z"/><circle cx="9" cy="3" r="1.2" fill="#3c3c3c"/></svg>
<svg class="a" style="left:3030px;top:31px" width="13" height="13" viewBox="0 0 13 13"><circle cx="6.5" cy="6.5" r="6.3" fill="#d8d8d8"/><rect x="5.5" y="2.5" width="2" height="5.5" fill="#3c3c3c"/><rect x="5.5" y="9" width="2" height="2" fill="#3c3c3c"/></svg>
<svg class="a" style="left:3057px;top:32px" width="12" height="12" viewBox="0 0 12 12" fill="#909090"><path d="M6 0L7.6 4.2L12 4.5L8.6 7.3L9.7 11.5L6 9.1L2.3 11.5L3.4 7.3L0 4.5L4.4 4.2Z"/></svg>
<svg class="a" style="left:3081px;top:33px" width="15" height="10" viewBox="0 0 15 10" fill="none" stroke="#9a9a9a" stroke-width="1.2"><path d="M0.8 5C4 0 11 0 14.2 5C11 10 4 10 0.8 5Z"/><circle cx="7.5" cy="5" r="2.2" fill="#9a9a9a"/></svg>
<div class="t" style="left:3098px;top:30px;color:#c8c8c8">21</div>
<!-- left tree -->
<div class="a" style="left:2305px;top:48px;width:190px;height:852px;background:#383838"></div>
<div class="a" style="left:2495px;top:48px;width:1px;height:852px;background:#232323"></div>
<div class="a" style="left:2496px;top:48px;width:620px;height:22px;background:#3e3e3e"></div>
<div class="a" style="left:2496px;top:70px;width:620px;height:830px;background:#333333"></div>
<div class="t" style="left:2500px;top:50.5px;color:#c4c4c4">Assets</div>
<svg class="a" style="left:2544px;top:55px" width="6" height="10" viewBox="0 0 6 10" fill="none" stroke="#a0a0a0" stroke-width="1.3"><path d="M0.8 1L5 5L0.8 9"/></svg>
<div class="t" style="left:2555.5px;top:50.5px;color:#c4c4c4">UnityChanAdventure</div>
<svg class="a" style="left:2680px;top:55px" width="6" height="10" viewBox="0 0 6 10" fill="none" stroke="#a0a0a0" stroke-width="1.3"><path d="M0.8 1L5 5L0.8 9"/></svg>
<div class="t" style="left:2691px;top:50.5px;color:#d2d2d2;font-weight:bold">Prefabs</div>

<svg class="a" style="left:2309px;top:54.5px" width="9" height="8" viewBox="0 0 9 8" fill="#8a8a8a"><path d="M0 0H9L4.5 8Z"/></svg>
<svg class="a" style="left:2323px;top:51.0px" width="12" height="12" viewBox="0 0 12 12" fill="#d0d0d0"><path d="M6 0L7.6 4.2L12 4.5L8.6 7.3L9.7 11.5L6 9.1L2.3 11.5L3.4 7.3L0 4.5L4.4 4.2Z"/></svg>
<div class="t" style="left:2340px;top:48.7px;color:#c8c8c8;font-weight:bold;">Favorites</div>
<svg class="a" style="left:2337px;top:67.0px" width="12" height="12" viewBox="0 0 12 12" fill="none" stroke="#c8c8c8" stroke-width="1.2"><circle cx="4.8" cy="4.8" r="4"/><path d="M7.7 7.7L11.5 11.5" stroke-width="1.6"/></svg>
<div class="t" style="left:2353px;top:64.7px;color:#c8c8c8;">All Materials</div>
<svg class="a" style="left:2337px;top:83.0px" width="12" height="12" viewBox="0 0 12 12" fill="none" stroke="#c8c8c8" stroke-width="1.2"><circle cx="4.8" cy="4.8" r="4"/><path d="M7.7 7.7L11.5 11.5" stroke-width="1.6"/></svg>
<div class="t" style="left:2353px;top:80.7px;color:#c8c8c8;">All Models</div>
<svg class="a" style="left:2337px;top:99.0px" width="12" height="12" viewBox="0 0 12 12" fill="none" stroke="#c8c8c8" stroke-width="1.2"><circle cx="4.8" cy="4.8" r="4"/><path d="M7.7 7.7L11.5 11.5" stroke-width="1.6"/></svg>
<div class="t" style="left:2353px;top:96.7px;color:#c8c8c8;">All Prefabs</div>
<svg class="a" style="left:2309px;top:133.5px" width="9" height="8" viewBox="0 0 9 8" fill="#8a8a8a"><path d="M0 0H9L4.5 8Z"/></svg>
<svg class="a" style="left:2323px;top:131.0px" width="13" height="10" viewBox="0 0 13 10" fill="none" stroke="#d0d0d0" stroke-width="1.2"><path d="M0.6 9.4V1A0.5 0.5 0 0 1 1.1 0.6H4.5L6 2H10.5V4"/><path d="M0.6 9.4L2.8 4H12.5L10.3 9.4Z" fill="#d0d0d0"/></svg>
<div class="t" style="left:2340px;top:127.7px;color:#c8c8c8;font-weight:bold;">Assets</div>
<svg class="a" style="left:2337px;top:147.0px" width="12" height="10" viewBox="0 0 12 10" fill="#d0d0d0"><path d="M0 1A1 1 0 0 1 1 0H4.5L6 1.5H11A1 1 0 0 1 12 2.5V9A1 1 0 0 1 11 10H1A1 1 0 0 1 0 9Z"/></svg>
<div class="t" style="left:2353px;top:143.7px;color:#c8c8c8;">Scenes</div>
<svg class="a" style="left:2337px;top:163.0px" width="12" height="10" viewBox="0 0 12 10" fill="#d0d0d0"><path d="M0 1A1 1 0 0 1 1 0H4.5L6 1.5H11A1 1 0 0 1 12 2.5V9A1 1 0 0 1 11 10H1A1 1 0 0 1 0 9Z"/></svg>
<div class="t" style="left:2353px;top:159.7px;color:#c8c8c8;">Settings</div>
<svg class="a" style="left:2324px;top:180.0px" width="8" height="9" viewBox="0 0 8 9" fill="#8a8a8a"><path d="M0 0V9L8 4.5Z"/></svg>
<svg class="a" style="left:2337px;top:179.0px" width="12" height="10" viewBox="0 0 12 10" fill="#d0d0d0"><path d="M0 1A1 1 0 0 1 1 0H4.5L6 1.5H11A1 1 0 0 1 12 2.5V9A1 1 0 0 1 11 10H1A1 1 0 0 1 0 9Z"/></svg>
<div class="t" style="left:2353px;top:175.7px;color:#c8c8c8;">TutorialInfo</div>
<svg class="a" style="left:2323px;top:197.5px" width="9" height="8" viewBox="0 0 9 8" fill="#8a8a8a"><path d="M0 0H9L4.5 8Z"/></svg>
<svg class="a" style="left:2337px;top:195.0px" width="13" height="10" viewBox="0 0 13 10" fill="none" stroke="#d0d0d0" stroke-width="1.2"><path d="M0.6 9.4V1A0.5 0.5 0 0 1 1.1 0.6H4.5L6 2H10.5V4"/><path d="M0.6 9.4L2.8 4H12.5L10.3 9.4Z" fill="#d0d0d0"/></svg>
<div class="t" style="left:2353px;top:191.7px;color:#c8c8c8;">UnityChan</div>
<svg class="a" style="left:2351px;top:211.0px" width="12" height="10" viewBox="0 0 12 10" fill="#d0d0d0"><path d="M0 1A1 1 0 0 1 1 0H4.5L6 1.5H11A1 1 0 0 1 12 2.5V9A1 1 0 0 1 11 10H1A1 1 0 0 1 0 9Z"/></svg>
<div class="t" style="left:2367px;top:207.7px;color:#c8c8c8;">Animations</div>
<svg class="a" style="left:2351px;top:227.0px" width="12" height="10" viewBox="0 0 12 10" fill="#d0d0d0"><path d="M0 1A1 1 0 0 1 1 0H4.5L6 1.5H11A1 1 0 0 1 12 2.5V9A1 1 0 0 1 11 10H1A1 1 0 0 1 0 9Z"/></svg>
<div class="t" style="left:2367px;top:223.7px;color:#c8c8c8;">Animators</div>
<svg class="a" style="left:2351px;top:243.0px" width="12" height="10" viewBox="0 0 12 10" fill="#d0d0d0"><path d="M0 1A1 1 0 0 1 1 0H4.5L6 1.5H11A1 1 0 0 1 12 2.5V9A1 1 0 0 1 11 10H1A1 1 0 0 1 0 9Z"/></svg>
<div class="t" style="left:2367px;top:239.7px;color:#c8c8c8;">Documentation</div>
<svg class="a" style="left:2351px;top:259.0px" width="12" height="10" viewBox="0 0 12 10" fill="#d0d0d0"><path d="M0 1A1 1 0 0 1 1 0H4.5L6 1.5H11A1 1 0 0 1 12 2.5V9A1 1 0 0 1 11 10H1A1 1 0 0 1 0 9Z"/></svg>
<div class="t" style="left:2367px;top:255.7px;color:#c8c8c8;">Editor</div>
<svg class="a" style="left:2351px;top:275.0px" width="12" height="10" viewBox="0 0 12 10" fill="#d0d0d0"><path d="M0 1A1 1 0 0 1 1 0H4.5L6 1.5H11A1 1 0 0 1 12 2.5V9A1 1 0 0 1 11 10H1A1 1 0 0 1 0 9Z"/></svg>
<div class="t" style="left:2367px;top:271.7px;color:#c8c8c8;">FaceAnimation</div>
<svg class="a" style="left:2338px;top:292.0px" width="8" height="9" viewBox="0 0 8 9" fill="#8a8a8a"><path d="M0 0V9L8 4.5Z"/></svg>
<svg class="a" style="left:2351px;top:291.0px" width="12" height="10" viewBox="0 0 12 10" fill="#d0d0d0"><path d="M0 1A1 1 0 0 1 1 0H4.5L6 1.5H11A1 1 0 0 1 12 2.5V9A1 1 0 0 1 11 10H1A1 1 0 0 1 0 9Z"/></svg>
<div class="t" style="left:2367px;top:287.7px;color:#c8c8c8;">License</div>
<svg class="a" style="left:2337px;top:309.5px" width="9" height="8" viewBox="0 0 9 8" fill="#8a8a8a"><path d="M0 0H9L4.5 8Z"/></svg>
<svg class="a" style="left:2351px;top:307.0px" width="13" height="10" viewBox="0 0 13 10" fill="none" stroke="#d0d0d0" stroke-width="1.2"><path d="M0.6 9.4V1A0.5 0.5 0 0 1 1.1 0.6H4.5L6 2H10.5V4"/><path d="M0.6 9.4L2.8 4H12.5L10.3 9.4Z" fill="#d0d0d0"/></svg>
<div class="t" style="left:2367px;top:303.7px;color:#c8c8c8;">Models</div>
<svg class="a" style="left:2365px;top:323.0px" width="12" height="10" viewBox="0 0 12 10" fill="#d0d0d0"><path d="M0 1A1 1 0 0 1 1 0H4.5L6 1.5H11A1 1 0 0 1 12 2.5V9A1 1 0 0 1 11 10H1A1 1 0 0 1 0 9Z"/></svg>
<div class="t" style="left:2381px;top:319.7px;color:#c8c8c8;">Materials</div>
<svg class="a" style="left:2365px;top:339.0px" width="12" height="10" viewBox="0 0 12 10" fill="#d0d0d0"><path d="M0 1A1 1 0 0 1 1 0H4.5L6 1.5H11A1 1 0 0 1 12 2.5V9A1 1 0 0 1 11 10H1A1 1 0 0 1 0 9Z"/></svg>
<div class="t" style="left:2381px;top:335.7px;color:#c8c8c8;">Texture</div>
<svg class="a" style="left:2337px;top:357.5px" width="9" height="8" viewBox="0 0 9 8" fill="#8a8a8a"><path d="M0 0H9L4.5 8Z"/></svg>
<svg class="a" style="left:2351px;top:355.0px" width="13" height="10" viewBox="0 0 13 10" fill="none" stroke="#d0d0d0" stroke-width="1.2"><path d="M0.6 9.4V1A0.5 0.5 0 0 1 1.1 0.6H4.5L6 2H10.5V4"/><path d="M0.6 9.4L2.8 4H12.5L10.3 9.4Z" fill="#d0d0d0"/></svg>
<div class="t" style="left:2367px;top:351.7px;color:#c8c8c8;">Prefabs</div>
<svg class="a" style="left:2365px;top:371.0px" width="12" height="10" viewBox="0 0 12 10" fill="#d0d0d0"><path d="M0 1A1 1 0 0 1 1 0H4.5L6 1.5H11A1 1 0 0 1 12 2.5V9A1 1 0 0 1 11 10H1A1 1 0 0 1 0 9Z"/></svg>
<div class="t" style="left:2381px;top:367.7px;color:#c8c8c8;">for Locomotion</div>
<svg class="a" style="left:2351px;top:387.0px" width="12" height="10" viewBox="0 0 12 10" fill="#d0d0d0"><path d="M0 1A1 1 0 0 1 1 0H4.5L6 1.5H11A1 1 0 0 1 12 2.5V9A1 1 0 0 1 11 10H1A1 1 0 0 1 0 9Z"/></svg>
<div class="t" style="left:2367px;top:383.7px;color:#c8c8c8;">ReadMe_Old</div>
<svg class="a" style="left:2338px;top:404.0px" width="8" height="9" viewBox="0 0 8 9" fill="#8a8a8a"><path d="M0 0V9L8 4.5Z"/></svg>
<svg class="a" style="left:2351px;top:403.0px" width="12" height="10" viewBox="0 0 12 10" fill="#d0d0d0"><path d="M0 1A1 1 0 0 1 1 0H4.5L6 1.5H11A1 1 0 0 1 12 2.5V9A1 1 0 0 1 11 10H1A1 1 0 0 1 0 9Z"/></svg>
<div class="t" style="left:2367px;top:399.7px;color:#c8c8c8;">Scenes</div>
<svg class="a" style="left:2351px;top:419.0px" width="12" height="10" viewBox="0 0 12 10" fill="#d0d0d0"><path d="M0 1A1 1 0 0 1 1 0H4.5L6 1.5H11A1 1 0 0 1 12 2.5V9A1 1 0 0 1 11 10H1A1 1 0 0 1 0 9Z"/></svg>
<div class="t" style="left:2367px;top:415.7px;color:#c8c8c8;">Scripts</div>
<svg class="a" style="left:2338px;top:436.0px" width="8" height="9" viewBox="0 0 8 9" fill="#8a8a8a"><path d="M0 0V9L8 4.5Z"/></svg>
<svg class="a" style="left:2351px;top:435.0px" width="12" height="10" viewBox="0 0 12 10" fill="#d0d0d0"><path d="M0 1A1 1 0 0 1 1 0H4.5L6 1.5H11A1 1 0 0 1 12 2.5V9A1 1 0 0 1 11 10H1A1 1 0 0 1 0 9Z"/></svg>
<div class="t" style="left:2367px;top:431.7px;color:#c8c8c8;">Stage</div>
<svg class="a" style="left:2351px;top:451.0px" width="12" height="10" viewBox="0 0 12 10" fill="#d0d0d0"><path d="M0 1A1 1 0 0 1 1 0H4.5L6 1.5H11A1 1 0 0 1 12 2.5V9A1 1 0 0 1 11 10H1A1 1 0 0 1 0 9Z"/></svg>
<div class="t" style="left:2367px;top:447.7px;color:#c8c8c8;">Voice</div>
<svg class="a" style="left:2323px;top:469.5px" width="9" height="8" viewBox="0 0 9 8" fill="#8a8a8a"><path d="M0 0H9L4.5 8Z"/></svg>
<svg class="a" style="left:2337px;top:467.0px" width="13" height="10" viewBox="0 0 13 10" fill="none" stroke="#d0d0d0" stroke-width="1.2"><path d="M0.6 9.4V1A0.5 0.5 0 0 1 1.1 0.6H4.5L6 2H10.5V4"/><path d="M0.6 9.4L2.8 4H12.5L10.3 9.4Z" fill="#d0d0d0"/></svg>
<div class="t" style="left:2353px;top:463.7px;color:#c8c8c8;">UnityChanAdventure</div>
<svg class="a" style="left:2351px;top:483.0px" width="12" height="10" viewBox="0 0 12 10" fill="#d0d0d0"><path d="M0 1A1 1 0 0 1 1 0H4.5L6 1.5H11A1 1 0 0 1 12 2.5V9A1 1 0 0 1 11 10H1A1 1 0 0 1 0 9Z"/></svg>
<div class="t" style="left:2367px;top:479.7px;color:#c8c8c8;">Animation</div>
<svg class="a" style="left:2351px;top:499.0px" width="12" height="10" viewBox="0 0 12 10" fill="#d0d0d0"><path d="M0 1A1 1 0 0 1 1 0H4.5L6 1.5H11A1 1 0 0 1 12 2.5V9A1 1 0 0 1 11 10H1A1 1 0 0 1 0 9Z"/></svg>
<div class="t" style="left:2367px;top:495.7px;color:#c8c8c8;">Font</div>
<svg class="a" style="left:2351px;top:515.0px" width="12" height="10" viewBox="0 0 12 10" fill="#d0d0d0"><path d="M0 1A1 1 0 0 1 1 0H4.5L6 1.5H11A1 1 0 0 1 12 2.5V9A1 1 0 0 1 11 10H1A1 1 0 0 1 0 9Z"/></svg>
<div class="t" style="left:2367px;top:511.7px;color:#c8c8c8;">Materials</div>
<svg class="a" style="left:2337px;top:533.5px" width="9" height="8" viewBox="0 0 9 8" fill="#8a8a8a"><path d="M0 0H9L4.5 8Z"/></svg>
<svg class="a" style="left:2351px;top:531.0px" width="13" height="10" viewBox="0 0 13 10" fill="none" stroke="#d0d0d0" stroke-width="1.2"><path d="M0.6 9.4V1A0.5 0.5 0 0 1 1.1 0.6H4.5L6 2H10.5V4"/><path d="M0.6 9.4L2.8 4H12.5L10.3 9.4Z" fill="#d0d0d0"/></svg>
<div class="t" style="left:2367px;top:527.7px;color:#c8c8c8;">Models</div>
<svg class="a" style="left:2365px;top:547.0px" width="12" height="10" viewBox="0 0 12 10" fill="#d0d0d0"><path d="M0 1A1 1 0 0 1 1 0H4.5L6 1.5H11A1 1 0 0 1 12 2.5V9A1 1 0 0 1 11 10H1A1 1 0 0 1 0 9Z"/></svg>
<div class="t" style="left:2381px;top:543.7px;color:#c8c8c8;">House</div>
<svg class="a" style="left:2365px;top:563.0px" width="12" height="10" viewBox="0 0 12 10" fill="#d0d0d0"><path d="M0 1A1 1 0 0 1 1 0H4.5L6 1.5H11A1 1 0 0 1 12 2.5V9A1 1 0 0 1 11 10H1A1 1 0 0 1 0 9Z"/></svg>
<div class="t" style="left:2381px;top:559.7px;color:#c8c8c8;">Medal</div>
<svg class="a" style="left:2365px;top:579.0px" width="12" height="10" viewBox="0 0 12 10" fill="#d0d0d0"><path d="M0 1A1 1 0 0 1 1 0H4.5L6 1.5H11A1 1 0 0 1 12 2.5V9A1 1 0 0 1 11 10H1A1 1 0 0 1 0 9Z"/></svg>
<div class="t" style="left:2381px;top:575.7px;color:#c8c8c8;">Rocks</div>
<svg class="a" style="left:2365px;top:595.0px" width="12" height="10" viewBox="0 0 12 10" fill="#d0d0d0"><path d="M0 1A1 1 0 0 1 1 0H4.5L6 1.5H11A1 1 0 0 1 12 2.5V9A1 1 0 0 1 11 10H1A1 1 0 0 1 0 9Z"/></svg>
<div class="t" style="left:2381px;top:591.7px;color:#c8c8c8;">Tree</div>
<div class="a" style="left:2305px;top:608px;width:190px;height:16px;background:#4d4d4d"></div>
<svg class="a" style="left:2351px;top:611.0px" width="12" height="10" viewBox="0 0 12 10" fill="#d0d0d0"><path d="M0 1A1 1 0 0 1 1 0H4.5L6 1.5H11A1 1 0 0 1 12 2.5V9A1 1 0 0 1 11 10H1A1 1 0 0 1 0 9Z"/></svg>
<div class="t" style="left:2367px;top:607.7px;color:#c8c8c8;">Prefabs</div>
<svg class="a" style="left:2351px;top:627.0px" width="12" height="10" viewBox="0 0 12 10" fill="#d0d0d0"><path d="M0 1A1 1 0 0 1 1 0H4.5L6 1.5H11A1 1 0 0 1 12 2.5V9A1 1 0 0 1 11 10H1A1 1 0 0 1 0 9Z"/></svg>
<div class="t" style="left:2367px;top:623.7px;color:#c8c8c8;">Scenes</div>
<svg class="a" style="left:2351px;top:643.0px" width="12" height="10" viewBox="0 0 12 10" fill="#d0d0d0"><path d="M0 1A1 1 0 0 1 1 0H4.5L6 1.5H11A1 1 0 0 1 12 2.5V9A1 1 0 0 1 11 10H1A1 1 0 0 1 0 9Z"/></svg>
<div class="t" style="left:2367px;top:639.7px;color:#c8c8c8;">Scripts</div>
<svg class="a" style="left:2337px;top:661.5px" width="9" height="8" viewBox="0 0 9 8" fill="#8a8a8a"><path d="M0 0H9L4.5 8Z"/></svg>
<svg class="a" style="left:2351px;top:659.0px" width="13" height="10" viewBox="0 0 13 10" fill="none" stroke="#d0d0d0" stroke-width="1.2"><path d="M0.6 9.4V1A0.5 0.5 0 0 1 1.1 0.6H4.5L6 2H10.5V4"/><path d="M0.6 9.4L2.8 4H12.5L10.3 9.4Z" fill="#d0d0d0"/></svg>
<div class="t" style="left:2367px;top:655.7px;color:#c8c8c8;">Textures</div>
<svg class="a" style="left:2365px;top:675.0px" width="12" height="10" viewBox="0 0 12 10" fill="#d0d0d0"><path d="M0 1A1 1 0 0 1 1 0H4.5L6 1.5H11A1 1 0 0 1 12 2.5V9A1 1 0 0 1 11 10H1A1 1 0 0 1 0 9Z"/></svg>
<div class="t" style="left:2381px;top:671.7px;color:#c8c8c8;">MCCLogo</div>
<svg class="a" style="left:2365px;top:691.0px" width="12" height="10" viewBox="0 0 12 10" fill="#d0d0d0"><path d="M0 1A1 1 0 0 1 1 0H4.5L6 1.5H11A1 1 0 0 1 12 2.5V9A1 1 0 0 1 11 10H1A1 1 0 0 1 0 9Z"/></svg>
<div class="t" style="left:2381px;top:687.7px;color:#c8c8c8;">Rock</div>
<svg class="a" style="left:2365px;top:707.0px" width="12" height="10" viewBox="0 0 12 10" fill="#d0d0d0"><path d="M0 1A1 1 0 0 1 1 0H4.5L6 1.5H11A1 1 0 0 1 12 2.5V9A1 1 0 0 1 11 10H1A1 1 0 0 1 0 9Z"/></svg>
<div class="t" style="left:2381px;top:703.7px;color:#c8c8c8;">TerrainGrass</div>
<svg class="a" style="left:2365px;top:723.0px" width="12" height="10" viewBox="0 0 12 10" fill="#d0d0d0"><path d="M0 1A1 1 0 0 1 1 0H4.5L6 1.5H11A1 1 0 0 1 12 2.5V9A1 1 0 0 1 11 10H1A1 1 0 0 1 0 9Z"/></svg>
<div class="t" style="left:2381px;top:719.7px;color:#c8c8c8;">TerrainRoad</div>
<svg class="a" style="left:2310px;top:740.0px" width="8" height="9" viewBox="0 0 8 9" fill="#8a8a8a"><path d="M0 0V9L8 4.5Z"/></svg>
<svg class="a" style="left:2323px;top:739.0px" width="12" height="10" viewBox="0 0 12 10" fill="#d0d0d0"><path d="M0 1A1 1 0 0 1 1 0H4.5L6 1.5H11A1 1 0 0 1 12 2.5V9A1 1 0 0 1 11 10H1A1 1 0 0 1 0 9Z"/></svg>
<div class="t" style="left:2340px;top:735.7px;color:#c8c8c8;font-weight:bold;">Packages</div>
<svg class="a" style="left:2519.5px;top:84.5px" width="54" height="57" viewBox="0 0 54 57"><path fill="#80d4fc" d="M27 0L52 12.5Q54 13.5 54 15.5V41.5Q54 43.5 52 44.5L27 57L2 44.5Q0 43.5 0 41.5V15.5Q0 13.5 2 12.5Z"/><path d="M2 13.5L27 26L52 13.5M27 26V57" stroke="#333333" stroke-width="3.2" fill="none"/></svg>
<div class="t" style="left:2508px;top:144.5px;width:80px;text-align:center;color:#c8c8c8;font-size:10.7px">GameMan...</div>
<div class="a" style="left:2604px;top:82px;width:60px;height:60px;background:linear-gradient(#575757,#4f4f4f);box-shadow:0 0 1px #1e1e1e"></div>
<svg class="a" style="left:2604px;top:82px" width="60" height="60" viewBox="0 0 60 60"><path d="M2.8 29.8L39 38L39 50L3.6 41.4Z" fill="#9c9c9c"/><path d="M39 38L52.5 31.8L52 43L39 50Z" fill="#5e5e5e"/><path d="M42 38L48 35L48 40L42 43Z" fill="#d8d8d8"/><path d="M44 39L47 37.5V41L44 42.5Z" fill="#1e1e1e"/><path d="M1.5 27.3L13.6 19.5L39.3 23.2L45 28.1L52.5 31.8L43.4 37.2L39 38L2.8 29.8Z" fill="#2a2e36"/><path d="M1.5 27.3L2.8 29.8L39 38L43.4 37.2" fill="none" stroke="#4a4e56" stroke-width="0.8"/><rect x="9.4" y="37.2" width="5.8" height="5.8" fill="#8a8a8a" transform="skewY(12) translate(0,-2)"/></svg>
<div class="a" style="left:2594px;top:145px;width:80px;height:14px;display:flex;justify-content:center;align-items:center;gap:2px"><svg  width="11.6" height="12.3" viewBox="0 0 19 21" preserveAspectRatio="none"><g clip-path="url(#pfLeft)" stroke="#cfcfcf" stroke-width="2"><path d="M-3 8.5L7 -1.5M-3 13.5L11 -0.5M-3 18.5L13 2.5M0 22L13 9M4 24L13 15"/></g><path d="M9.5 0L19 4.2L9.5 8.5L0 4.2Z" fill="#80d4fc"/><path d="M9.5 8.5L19 4.2V16.5L9.5 21Z" fill="#7bd0fa"/><path d="M0 4.2L9.5 8.5L19 4.2M9.5 8.5V21" stroke="#2a2a2a" stroke-width="0.9" fill="none"/></svg><span style="color:#c8c8c8;font-size:10.7px;line-height:14px">house</span></div>
<div class="a" style="left:2690px;top:82px;width:60px;height:60px;background:linear-gradient(#575757,#4f4f4f);box-shadow:0 0 1px #1e1e1e"></div>
<svg class="a" style="left:2690px;top:82px" width="60" height="60" viewBox="0 0 60 60"><path d="M11 22L20 13L30 12L36 18L43 22L48 33L44 41L32 47L20 46L12 40L10 31Z" fill="#3d3f3f"/><path d="M11 22L20 13L25 20L19 33L11 38Z" fill="#5d5d57"/><path d="M20 13L30 12L33 19L25 20Z" fill="#4c4e4e"/><path d="M25 27L34 24L37 36L27 40Z" fill="#1c1d1e"/><path d="M12 40L22 46L21 37L13 35Z" fill="#5a5a50"/><path d="M37 25L45 30L42 40L36 36Z" fill="#2e3031"/></svg>
<div class="a" style="left:2680px;top:145px;width:80px;height:14px;display:flex;justify-content:center;align-items:center;gap:2px"><svg  width="11.6" height="12.3" viewBox="0 0 19 21" preserveAspectRatio="none"><g clip-path="url(#pfLeft)" stroke="#cfcfcf" stroke-width="2"><path d="M-3 8.5L7 -1.5M-3 13.5L11 -0.5M-3 18.5L13 2.5M0 22L13 9M4 24L13 15"/></g><path d="M9.5 0L19 4.2L9.5 8.5L0 4.2Z" fill="#80d4fc"/><path d="M9.5 8.5L19 4.2V16.5L9.5 21Z" fill="#7bd0fa"/><path d="M0 4.2L9.5 8.5L19 4.2M9.5 8.5V21" stroke="#2a2a2a" stroke-width="0.9" fill="none"/></svg><span style="color:#c8c8c8;font-size:10.7px;line-height:14px">rock_a</span></div>
<div class="a" style="left:2775px;top:82px;width:60px;height:60px;background:linear-gradient(#575757,#4f4f4f);box-shadow:0 0 1px #1e1e1e"></div>
<svg class="a" style="left:2775px;top:82px" width="60" height="60" viewBox="0 0 60 60"><path d="M18 22L24 14L34 13L40 20L38 32L32 43L24 47L16 38L15 30Z" fill="#4a4c4e"/><path d="M15 32L21 25L26 36L22 46L16 40Z" fill="#6c6c62"/><path d="M24 14L34 13L32 24L26 22Z" fill="#393b3f"/><path d="M27 36L35 33L31 42Z" fill="#2b2c2e"/></svg>
<div class="a" style="left:2765px;top:145px;width:80px;height:14px;display:flex;justify-content:center;align-items:center;gap:2px"><svg  width="11.6" height="12.3" viewBox="0 0 19 21" preserveAspectRatio="none"><g clip-path="url(#pfLeft)" stroke="#cfcfcf" stroke-width="2"><path d="M-3 8.5L7 -1.5M-3 13.5L11 -0.5M-3 18.5L13 2.5M0 22L13 9M4 24L13 15"/></g><path d="M9.5 0L19 4.2L9.5 8.5L0 4.2Z" fill="#80d4fc"/><path d="M9.5 8.5L19 4.2V16.5L9.5 21Z" fill="#7bd0fa"/><path d="M0 4.2L9.5 8.5L19 4.2M9.5 8.5V21" stroke="#2a2a2a" stroke-width="0.9" fill="none"/></svg><span style="color:#c8c8c8;font-size:10.7px;line-height:14px">rock_b</span></div>
<div class="a" style="left:2861px;top:82px;width:60px;height:60px;background:linear-gradient(#575757,#4f4f4f);box-shadow:0 0 1px #1e1e1e"></div>
<svg class="a" style="left:2861px;top:82px" width="60" height="60" viewBox="0 0 60 60"><path d="M14 20L22 11L37 12L42 24L36 41L25 51L16 44L13 32Z" fill="#2f3030"/><path d="M14 22L20 16L23 31L19 47L14 38Z" fill="#4f5048"/><path d="M25 22L32 18L30 38Z" fill="#404141"/><path d="M30 38L38 30L33 45Z" fill="#262727"/></svg>
<div class="a" style="left:2851px;top:145px;width:80px;height:14px;display:flex;justify-content:center;align-items:center;gap:2px"><svg  width="11.6" height="12.3" viewBox="0 0 19 21" preserveAspectRatio="none"><g clip-path="url(#pfLeft)" stroke="#cfcfcf" stroke-width="2"><path d="M-3 8.5L7 -1.5M-3 13.5L11 -0.5M-3 18.5L13 2.5M0 22L13 9M4 24L13 15"/></g><path d="M9.5 0L19 4.2L9.5 8.5L0 4.2Z" fill="#80d4fc"/><path d="M9.5 8.5L19 4.2V16.5L9.5 21Z" fill="#7bd0fa"/><path d="M0 4.2L9.5 8.5L19 4.2M9.5 8.5V21" stroke="#2a2a2a" stroke-width="0.9" fill="none"/></svg><span style="color:#c8c8c8;font-size:10.7px;line-height:14px">rock_c</span></div>
<div class="a" style="left:2947px;top:82px;width:60px;height:60px;background:linear-gradient(#575757,#4f4f4f);box-shadow:0 0 1px #1e1e1e"></div>
<svg class="a" style="left:2947px;top:82px" width="60" height="60" viewBox="0 0 60 60"><path d="M21 21L29 26L39 37L42 42L36 40L26 31Z" fill="#6a6e6c"/><path d="M21 21L27 27L25 30Z" fill="#80837f"/></svg>
<div class="a" style="left:2937px;top:145px;width:80px;height:14px;display:flex;justify-content:center;align-items:center;gap:2px"><svg  width="11.6" height="12.3" viewBox="0 0 19 21" preserveAspectRatio="none"><g clip-path="url(#pfLeft)" stroke="#cfcfcf" stroke-width="2"><path d="M-3 8.5L7 -1.5M-3 13.5L11 -0.5M-3 18.5L13 2.5M0 22L13 9M4 24L13 15"/></g><path d="M9.5 0L19 4.2L9.5 8.5L0 4.2Z" fill="#80d4fc"/><path d="M9.5 8.5L19 4.2V16.5L9.5 21Z" fill="#7bd0fa"/><path d="M0 4.2L9.5 8.5L19 4.2M9.5 8.5V21" stroke="#2a2a2a" stroke-width="0.9" fill="none"/></svg><span style="color:#c8c8c8;font-size:10.7px;line-height:14px">rock_d</span></div>
<svg class="a" style="left:3034.5px;top:84.5px" width="54" height="57" viewBox="0 0 54 57"><path fill="#80d4fc" d="M27 0L52 12.5Q54 13.5 54 15.5V41.5Q54 43.5 52 44.5L27 57L2 44.5Q0 43.5 0 41.5V15.5Q0 13.5 2 12.5Z"/><path d="M2 13.5L27 26L52 13.5M27 26V57" stroke="#333333" stroke-width="3.2" fill="none"/></svg>
<div class="t" style="left:3023px;top:144.5px;width:80px;text-align:center;color:#c8c8c8;font-size:10.7px">Stage</div>
<div class="a" style="left:2518px;top:175px;width:60px;height:60px;background:linear-gradient(#575757,#4f4f4f);box-shadow:0 0 1px #1e1e1e"></div>
<svg class="a" style="left:2518px;top:175px" width="60" height="60" viewBox="0 0 60 60"><rect x="29" y="37" width="1.6" height="14" fill="#b0b0b0"/><rect x="32.0" y="9.7" width="2.3" height="2" fill="#1d5a1f"/><rect x="28.8" y="13.5" width="2.3" height="2" fill="#2f8a32"/><rect x="36.5" y="26.0" width="2.3" height="2" fill="#2f8a32"/><rect x="29.4" y="6.4" width="2.3" height="2" fill="#2f8a32"/><rect x="17.4" y="29.5" width="2.3" height="2" fill="#2f8a32"/><rect x="22.2" y="28.2" width="2.3" height="2" fill="#1c1c1c"/><rect x="21.5" y="33.9" width="2.3" height="2" fill="#2f8a32"/><rect x="40.7" y="22.6" width="2.3" height="2" fill="#2f8a32"/><rect x="27.8" y="12.3" width="2.3" height="2" fill="#2f8a32"/><rect x="28.0" y="12.5" width="2.3" height="2" fill="#2f8a32"/><rect x="24.8" y="12.8" width="2.3" height="2" fill="#2f8a32"/><rect x="23.5" y="20.0" width="2.3" height="2" fill="#2f8a32"/><rect x="30.0" y="31.9" width="2.3" height="2" fill="#1d5a1f"/><rect x="35.0" y="11.4" width="2.3" height="2" fill="#1c1c1c"/><rect x="27.6" y="9.3" width="2.3" height="2" fill="#1d5a1f"/><rect x="39.7" y="27.9" width="2.3" height="2" fill="#2f8a32"/><rect x="32.3" y="31.6" width="2.3" height="2" fill="#2f8a32"/><rect x="39.2" y="24.0" width="2.3" height="2" fill="#1c1c1c"/><rect x="31.3" y="21.4" width="2.3" height="2" fill="#2f8a32"/><rect x="33.6" y="13.1" width="2.3" height="2" fill="#2f8a32"/><rect x="29.5" y="10.9" width="2.3" height="2" fill="#1d5a1f"/><rect x="25.7" y="26.7" width="2.3" height="2" fill="#2f8a32"/><rect x="36.3" y="21.5" width="2.3" height="2" fill="#2f8a32"/><rect x="28.7" y="17.9" width="2.3" height="2" fill="#2f8a32"/><rect x="29.4" y="6.9" width="2.3" height="2" fill="#1c1c1c"/><rect x="26.0" y="24.2" width="2.3" height="2" fill="#2f8a32"/><rect x="41.7" y="21.3" width="2.3" height="2" fill="#1d5a1f"/><rect x="38.6" y="22.5" width="2.3" height="2" fill="#2f8a32"/><rect x="40.9" y="21.7" width="2.3" height="2" fill="#2f8a32"/><rect x="23.0" y="20.0" width="2.3" height="2" fill="#2f8a32"/><rect x="22.8" y="35.6" width="2.3" height="2" fill="#1d5a1f"/><rect x="36.8" y="31.3" width="2.3" height="2" fill="#1d5a1f"/><rect x="29.3" y="31.0" width="2.3" height="2" fill="#2f8a32"/><rect x="17.9" y="18.9" width="2.3" height="2" fill="#1c1c1c"/><rect x="20.8" y="23.5" width="2.3" height="2" fill="#2f8a32"/><rect x="25.2" y="20.8" width="2.3" height="2" fill="#2f8a32"/><rect x="32.2" y="22.5" width="2.3" height="2" fill="#2f8a32"/><rect x="16.8" y="19.9" width="2.3" height="2" fill="#2f8a32"/><rect x="29.9" y="11.1" width="2.3" height="2" fill="#1c1c1c"/><rect x="35.3" y="30.7" width="2.3" height="2" fill="#1c1c1c"/><rect x="34.6" y="13.5" width="2.3" height="2" fill="#1d5a1f"/><rect x="26.3" y="8.1" width="2.3" height="2" fill="#2f8a32"/><rect x="23.1" y="29.3" width="2.3" height="2" fill="#2f8a32"/><rect x="24.7" y="25.2" width="2.3" height="2" fill="#2f8a32"/><rect x="29.2" y="10.5" width="2.3" height="2" fill="#2f8a32"/><rect x="32.6" y="14.1" width="2.3" height="2" fill="#2f8a32"/><rect x="28.4" y="15.6" width="2.3" height="2" fill="#2f8a32"/><rect x="27.1" y="17.7" width="2.3" height="2" fill="#2f8a32"/><rect x="31.7" y="8.9" width="2.3" height="2" fill="#2f8a32"/><rect x="30.4" y="12.1" width="2.3" height="2" fill="#1c1c1c"/><rect x="28.3" y="6.2" width="2.3" height="2" fill="#2f8a32"/><rect x="20.5" y="28.1" width="2.3" height="2" fill="#1d5a1f"/><rect x="30.1" y="26.9" width="2.3" height="2" fill="#2f8a32"/><rect x="32.2" y="36.2" width="2.3" height="2" fill="#2f8a32"/><rect x="31.1" y="12.5" width="2.3" height="2" fill="#2f8a32"/><rect x="24.1" y="23.6" width="2.3" height="2" fill="#1d5a1f"/><rect x="28.2" y="7.4" width="2.3" height="2" fill="#1c1c1c"/><rect x="25.5" y="33.1" width="2.3" height="2" fill="#1c1c1c"/><rect x="37.6" y="15.3" width="2.3" height="2" fill="#1d5a1f"/><rect x="22.9" y="18.6" width="2.3" height="2" fill="#2f8a32"/><rect x="20.9" y="33.2" width="2.3" height="2" fill="#1c1c1c"/><rect x="29.7" y="35.8" width="2.3" height="2" fill="#2f8a32"/><rect x="37.4" y="32.8" width="2.3" height="2" fill="#1d5a1f"/><rect x="25.7" y="21.5" width="2.3" height="2" fill="#2f8a32"/><rect x="31.3" y="12.0" width="2.3" height="2" fill="#2f8a32"/><rect x="23.8" y="11.6" width="2.3" height="2" fill="#1d5a1f"/><rect x="28.9" y="14.8" width="2.3" height="2" fill="#2f8a32"/><rect x="35.9" y="33.0" width="2.3" height="2" fill="#2f8a32"/><rect x="26.6" y="11.8" width="2.3" height="2" fill="#1c1c1c"/><rect x="25.3" y="30.2" width="2.3" height="2" fill="#2f8a32"/><rect x="37.6" y="26.7" width="2.3" height="2" fill="#1c1c1c"/><rect x="37.1" y="16.3" width="2.3" height="2" fill="#1d5a1f"/><rect x="41.6" y="20.8" width="2.3" height="2" fill="#2f8a32"/><rect x="18.8" y="28.4" width="2.3" height="2" fill="#2f8a32"/><rect x="24.5" y="34.2" width="2.3" height="2" fill="#1d5a1f"/><rect x="38.1" y="24.4" width="2.3" height="2" fill="#2f8a32"/><rect x="24.5" y="16.2" width="2.3" height="2" fill="#1c1c1c"/><rect x="41.1" y="24.5" width="2.3" height="2" fill="#1c1c1c"/><rect x="29.4" y="9.8" width="2.3" height="2" fill="#2f8a32"/><rect x="27.9" y="6.7" width="2.3" height="2" fill="#1c1c1c"/><rect x="36.1" y="30.3" width="2.3" height="2" fill="#2f8a32"/><rect x="36.5" y="24.9" width="2.3" height="2" fill="#2f8a32"/><rect x="21.4" y="23.5" width="2.3" height="2" fill="#2f8a32"/><rect x="35.7" y="13.9" width="2.3" height="2" fill="#2f8a32"/><rect x="28.3" y="34.6" width="2.3" height="2" fill="#2f8a32"/><rect x="36.1" y="30.3" width="2.3" height="2" fill="#2f8a32"/><rect x="18.3" y="26.6" width="2.3" height="2" fill="#2f8a32"/><rect x="21.2" y="33.4" width="2.3" height="2" fill="#2f8a32"/><rect x="28.1" y="36.6" width="2.3" height="2" fill="#2f8a32"/><rect x="26.0" y="10.8" width="2.3" height="2" fill="#1d5a1f"/><rect x="31.6" y="8.7" width="2.3" height="2" fill="#2f8a32"/><rect x="33.6" y="36.1" width="2.3" height="2" fill="#2f8a32"/><rect x="28.5" y="13.5" width="2.3" height="2" fill="#2f8a32"/><rect x="16.8" y="26.0" width="2.3" height="2" fill="#2f8a32"/><rect x="26.7" y="36.5" width="2.3" height="2" fill="#2f8a32"/><rect x="24.2" y="19.7" width="2.3" height="2" fill="#2f8a32"/><rect x="36.0" y="34.3" width="2.3" height="2" fill="#1c1c1c"/><rect x="26.8" y="9.0" width="2.3" height="2" fill="#2f8a32"/><rect x="29.4" y="36.4" width="2.3" height="2" fill="#1d5a1f"/><rect x="22.6" y="26.3" width="2.3" height="2" fill="#2f8a32"/><rect x="23.9" y="15.2" width="2.3" height="2" fill="#2f8a32"/><rect x="37.7" y="14.3" width="2.3" height="2" fill="#2f8a32"/><rect x="32.7" y="26.0" width="2.3" height="2" fill="#1c1c1c"/><rect x="24.4" y="17.8" width="2.3" height="2" fill="#2f8a32"/><rect x="35.9" y="15.5" width="2.3" height="2" fill="#1c1c1c"/><path d="M30 7V38M30 30L23 24M30 26L36 20M30 34L37 28M30 20L25 15" stroke="#c8c8c8" stroke-width="0.6" fill="none" opacity="0.8"/></svg>
<div class="a" style="left:2508px;top:238px;width:80px;height:14px;display:flex;justify-content:center;align-items:center;gap:2px"><svg  width="11.6" height="12.3" viewBox="0 0 19 21" preserveAspectRatio="none"><g clip-path="url(#pfLeft)" stroke="#cfcfcf" stroke-width="2"><path d="M-3 8.5L7 -1.5M-3 13.5L11 -0.5M-3 18.5L13 2.5M0 22L13 9M4 24L13 15"/></g><path d="M9.5 0L19 4.2L9.5 8.5L0 4.2Z" fill="#80d4fc"/><path d="M9.5 8.5L19 4.2V16.5L9.5 21Z" fill="#7bd0fa"/><path d="M0 4.2L9.5 8.5L19 4.2M9.5 8.5V21" stroke="#2a2a2a" stroke-width="0.9" fill="none"/></svg><span style="color:#c8c8c8;font-size:10.7px;line-height:14px">tree</span></div>
<div class="a" style="left:2604px;top:175px;width:60px;height:60px;background:linear-gradient(#575757,#4f4f4f);box-shadow:0 0 1px #1e1e1e"></div>
<svg class="a" style="left:2604px;top:175px" width="60" height="60" viewBox="0 0 60 60"><rect x="29" y="37" width="1.6" height="14" fill="#b0b0b0"/><rect x="34.4" y="35.6" width="2.3" height="2" fill="#c0552a"/><rect x="30.7" y="8.2" width="2.3" height="2" fill="#2e4a2a"/><rect x="23.9" y="26.6" width="2.3" height="2" fill="#c0552a"/><rect x="31.1" y="24.6" width="2.3" height="2" fill="#c0552a"/><rect x="26.3" y="19.1" width="2.3" height="2" fill="#2e4a2a"/><rect x="33.3" y="36.8" width="2.3" height="2" fill="#c0552a"/><rect x="23.1" y="19.5" width="2.3" height="2" fill="#c0552a"/><rect x="28.8" y="6.4" width="2.3" height="2" fill="#c0552a"/><rect x="37.9" y="17.5" width="2.3" height="2" fill="#c0552a"/><rect x="21.8" y="23.2" width="2.3" height="2" fill="#c0552a"/><rect x="21.4" y="15.7" width="2.3" height="2" fill="#c0552a"/><rect x="30.6" y="37.0" width="2.3" height="2" fill="#c0552a"/><rect x="33.7" y="33.6" width="2.3" height="2" fill="#2e4a2a"/><rect x="33.0" y="34.1" width="2.3" height="2" fill="#2e4a2a"/><rect x="39.4" y="16.6" width="2.3" height="2" fill="#1c1c1c"/><rect x="31.6" y="10.6" width="2.3" height="2" fill="#2e4a2a"/><rect x="29.7" y="20.0" width="2.3" height="2" fill="#c0552a"/><rect x="28.9" y="34.6" width="2.3" height="2" fill="#1c1c1c"/><rect x="37.3" y="16.6" width="2.3" height="2" fill="#1c1c1c"/><rect x="30.6" y="20.0" width="2.3" height="2" fill="#1c1c1c"/><rect x="28.6" y="28.3" width="2.3" height="2" fill="#c0552a"/><rect x="33.0" y="15.7" width="2.3" height="2" fill="#c0552a"/><rect x="25.3" y="34.1" width="2.3" height="2" fill="#1c1c1c"/><rect x="37.9" y="15.3" width="2.3" height="2" fill="#2e4a2a"/><rect x="29.4" y="21.4" width="2.3" height="2" fill="#2e4a2a"/><rect x="23.8" y="24.0" width="2.3" height="2" fill="#c0552a"/><rect x="40.4" y="21.6" width="2.3" height="2" fill="#2e4a2a"/><rect x="30.4" y="7.9" width="2.3" height="2" fill="#2e4a2a"/><rect x="24.1" y="34.1" width="2.3" height="2" fill="#2e4a2a"/><rect x="29.5" y="7.4" width="2.3" height="2" fill="#c0552a"/><rect x="34.5" y="12.6" width="2.3" height="2" fill="#c0552a"/><rect x="38.4" y="22.0" width="2.3" height="2" fill="#c0552a"/><rect x="34.2" y="12.1" width="2.3" height="2" fill="#c0552a"/><rect x="17.4" y="28.1" width="2.3" height="2" fill="#c0552a"/><rect x="30.9" y="10.9" width="2.3" height="2" fill="#c0552a"/><rect x="23.0" y="35.6" width="2.3" height="2" fill="#2e4a2a"/><rect x="28.6" y="6.2" width="2.3" height="2" fill="#1c1c1c"/><rect x="25.6" y="10.4" width="2.3" height="2" fill="#2e4a2a"/><rect x="18.3" y="17.6" width="2.3" height="2" fill="#1c1c1c"/><rect x="24.3" y="10.3" width="2.3" height="2" fill="#c0552a"/><rect x="35.4" y="24.9" width="2.3" height="2" fill="#c0552a"/><rect x="19.0" y="16.1" width="2.3" height="2" fill="#c0552a"/><rect x="34.4" y="29.6" width="2.3" height="2" fill="#1c1c1c"/><rect x="37.3" y="29.3" width="2.3" height="2" fill="#2e4a2a"/><rect x="21.8" y="20.4" width="2.3" height="2" fill="#2e4a2a"/><rect x="20.9" y="15.5" width="2.3" height="2" fill="#c0552a"/><rect x="22.4" y="33.1" width="2.3" height="2" fill="#c0552a"/><rect x="29.2" y="17.9" width="2.3" height="2" fill="#c0552a"/><rect x="26.0" y="35.7" width="2.3" height="2" fill="#c0552a"/><rect x="17.1" y="18.7" width="2.3" height="2" fill="#c0552a"/><rect x="24.8" y="9.9" width="2.3" height="2" fill="#c0552a"/><rect x="24.6" y="10.6" width="2.3" height="2" fill="#2e4a2a"/><rect x="41.7" y="21.5" width="2.3" height="2" fill="#1c1c1c"/><rect x="26.3" y="36.8" width="2.3" height="2" fill="#c0552a"/><rect x="30.4" y="13.4" width="2.3" height="2" fill="#2e4a2a"/><rect x="33.4" y="30.7" width="2.3" height="2" fill="#c0552a"/><rect x="29.5" y="18.8" width="2.3" height="2" fill="#c0552a"/><rect x="28.7" y="6.6" width="2.3" height="2" fill="#c0552a"/><rect x="22.6" y="28.3" width="2.3" height="2" fill="#c0552a"/><rect x="25.7" y="11.2" width="2.3" height="2" fill="#c0552a"/><rect x="27.9" y="21.9" width="2.3" height="2" fill="#c0552a"/><rect x="21.3" y="25.7" width="2.3" height="2" fill="#1c1c1c"/><rect x="31.6" y="35.8" width="2.3" height="2" fill="#c0552a"/><rect x="31.1" y="21.6" width="2.3" height="2" fill="#c0552a"/><rect x="29.5" y="18.7" width="2.3" height="2" fill="#c0552a"/><rect x="30.7" y="8.5" width="2.3" height="2" fill="#c0552a"/><rect x="40.2" y="21.9" width="2.3" height="2" fill="#c0552a"/><rect x="37.9" y="14.6" width="2.3" height="2" fill="#c0552a"/><rect x="29.1" y="6.1" width="2.3" height="2" fill="#c0552a"/><rect x="35.6" y="15.1" width="2.3" height="2" fill="#2e4a2a"/><rect x="28.9" y="6.0" width="2.3" height="2" fill="#c0552a"/><rect x="21.3" y="20.8" width="2.3" height="2" fill="#c0552a"/><rect x="27.9" y="7.8" width="2.3" height="2" fill="#c0552a"/><rect x="23.1" y="35.0" width="2.3" height="2" fill="#2e4a2a"/><rect x="29.8" y="11.6" width="2.3" height="2" fill="#c0552a"/><rect x="35.4" y="20.1" width="2.3" height="2" fill="#c0552a"/><rect x="25.9" y="9.3" width="2.3" height="2" fill="#c0552a"/><rect x="31.6" y="32.3" width="2.3" height="2" fill="#1c1c1c"/><rect x="16.8" y="27.3" width="2.3" height="2" fill="#2e4a2a"/><rect x="33.9" y="30.0" width="2.3" height="2" fill="#c0552a"/><rect x="28.0" y="16.8" width="2.3" height="2" fill="#2e4a2a"/><rect x="29.4" y="14.0" width="2.3" height="2" fill="#c0552a"/><rect x="32.7" y="35.6" width="2.3" height="2" fill="#1c1c1c"/><rect x="24.9" y="31.8" width="2.3" height="2" fill="#c0552a"/><rect x="22.6" y="20.9" width="2.3" height="2" fill="#c0552a"/><rect x="39.7" y="26.9" width="2.3" height="2" fill="#c0552a"/><rect x="20.6" y="31.3" width="2.3" height="2" fill="#c0552a"/><rect x="25.5" y="36.9" width="2.3" height="2" fill="#c0552a"/><rect x="27.2" y="7.6" width="2.3" height="2" fill="#1c1c1c"/><rect x="30.4" y="36.6" width="2.3" height="2" fill="#c0552a"/><rect x="23.8" y="14.8" width="2.3" height="2" fill="#2e4a2a"/><rect x="27.3" y="27.0" width="2.3" height="2" fill="#c0552a"/><rect x="29.2" y="9.0" width="2.3" height="2" fill="#1c1c1c"/><rect x="19.5" y="29.3" width="2.3" height="2" fill="#c0552a"/><rect x="22.9" y="28.0" width="2.3" height="2" fill="#1c1c1c"/><rect x="34.1" y="20.0" width="2.3" height="2" fill="#c0552a"/><rect x="31.6" y="36.8" width="2.3" height="2" fill="#c0552a"/><rect x="28.3" y="10.1" width="2.3" height="2" fill="#c0552a"/><rect x="39.2" y="24.2" width="2.3" height="2" fill="#c0552a"/><rect x="28.4" y="21.6" width="2.3" height="2" fill="#c0552a"/><rect x="39.8" y="27.9" width="2.3" height="2" fill="#2e4a2a"/><rect x="40.9" y="20.4" width="2.3" height="2" fill="#c0552a"/><rect x="32.7" y="29.0" width="2.3" height="2" fill="#2e4a2a"/><rect x="23.8" y="32.3" width="2.3" height="2" fill="#2e4a2a"/><rect x="32.9" y="18.2" width="2.3" height="2" fill="#1c1c1c"/><path d="M30 7V38M30 30L23 24M30 26L36 20M30 34L37 28M30 20L25 15" stroke="#c8c8c8" stroke-width="0.6" fill="none" opacity="0.8"/></svg>
<div class="a" style="left:2594px;top:238px;width:80px;height:14px;display:flex;justify-content:center;align-items:center;gap:2px"><svg  width="11.6" height="12.3" viewBox="0 0 19 21" preserveAspectRatio="none"><g clip-path="url(#pfLeft)" stroke="#cfcfcf" stroke-width="2"><path d="M-3 8.5L7 -1.5M-3 13.5L11 -0.5M-3 18.5L13 2.5M0 22L13 9M4 24L13 15"/></g><path d="M9.5 0L19 4.2L9.5 8.5L0 4.2Z" fill="#80d4fc"/><path d="M9.5 8.5L19 4.2V16.5L9.5 21Z" fill="#7bd0fa"/><path d="M0 4.2L9.5 8.5L19 4.2M9.5 8.5V21" stroke="#2a2a2a" stroke-width="0.9" fill="none"/></svg><span style="color:#c8c8c8;font-size:10.7px;line-height:14px">treered</span></div>
<div class="a" style="left:2690px;top:175px;width:60px;height:60px;background:linear-gradient(#575757,#4f4f4f);box-shadow:0 0 1px #1e1e1e"></div>
<svg class="a" style="left:2690px;top:175px" width="60" height="60" viewBox="0 0 60 60"><rect x="29" y="37" width="1.6" height="14" fill="#b0b0b0"/><rect x="29.6" y="13.0" width="2.3" height="2" fill="#b7b432"/><rect x="32.3" y="24.5" width="2.3" height="2" fill="#b7b432"/><rect x="29.1" y="5.9" width="2.3" height="2" fill="#b7b432"/><rect x="36.5" y="12.9" width="2.3" height="2" fill="#b7b432"/><rect x="28.4" y="31.8" width="2.3" height="2" fill="#3e5a2a"/><rect x="30.2" y="10.2" width="2.3" height="2" fill="#1c1c1c"/><rect x="35.4" y="22.0" width="2.3" height="2" fill="#3e5a2a"/><rect x="29.9" y="7.5" width="2.3" height="2" fill="#b7b432"/><rect x="19.9" y="15.0" width="2.3" height="2" fill="#1c1c1c"/><rect x="34.6" y="20.4" width="2.3" height="2" fill="#1c1c1c"/><rect x="39.3" y="28.0" width="2.3" height="2" fill="#b7b432"/><rect x="27.7" y="30.7" width="2.3" height="2" fill="#1c1c1c"/><rect x="22.0" y="33.2" width="2.3" height="2" fill="#b7b432"/><rect x="35.6" y="12.3" width="2.3" height="2" fill="#b7b432"/><rect x="23.6" y="25.2" width="2.3" height="2" fill="#b7b432"/><rect x="25.4" y="17.7" width="2.3" height="2" fill="#b7b432"/><rect x="39.8" y="23.9" width="2.3" height="2" fill="#3e5a2a"/><rect x="33.9" y="34.8" width="2.3" height="2" fill="#1c1c1c"/><rect x="20.2" y="26.6" width="2.3" height="2" fill="#1c1c1c"/><rect x="33.7" y="35.9" width="2.3" height="2" fill="#b7b432"/><rect x="21.7" y="28.0" width="2.3" height="2" fill="#1c1c1c"/><rect x="23.1" y="23.6" width="2.3" height="2" fill="#b7b432"/><rect x="38.0" y="32.4" width="2.3" height="2" fill="#b7b432"/><rect x="27.0" y="30.7" width="2.3" height="2" fill="#b7b432"/><rect x="34.0" y="14.8" width="2.3" height="2" fill="#1c1c1c"/><rect x="29.2" y="6.9" width="2.3" height="2" fill="#b7b432"/><rect x="24.7" y="28.1" width="2.3" height="2" fill="#1c1c1c"/><rect x="29.0" y="36.4" width="2.3" height="2" fill="#1c1c1c"/><rect x="20.6" y="15.3" width="2.3" height="2" fill="#b7b432"/><rect x="28.3" y="6.5" width="2.3" height="2" fill="#b7b432"/><rect x="19.7" y="24.7" width="2.3" height="2" fill="#b7b432"/><rect x="25.6" y="32.8" width="2.3" height="2" fill="#1c1c1c"/><rect x="26.9" y="33.7" width="2.3" height="2" fill="#b7b432"/><rect x="32.7" y="21.9" width="2.3" height="2" fill="#b7b432"/><rect x="32.1" y="23.1" width="2.3" height="2" fill="#1c1c1c"/><rect x="27.1" y="21.5" width="2.3" height="2" fill="#3e5a2a"/><rect x="25.8" y="13.0" width="2.3" height="2" fill="#1c1c1c"/><rect x="30.2" y="21.9" width="2.3" height="2" fill="#b7b432"/><rect x="30.8" y="18.6" width="2.3" height="2" fill="#b7b432"/><rect x="32.4" y="24.9" width="2.3" height="2" fill="#b7b432"/><rect x="28.0" y="25.3" width="2.3" height="2" fill="#3e5a2a"/><rect x="33.4" y="16.6" width="2.3" height="2" fill="#3e5a2a"/><rect x="28.4" y="6.2" width="2.3" height="2" fill="#3e5a2a"/><rect x="25.9" y="35.8" width="2.3" height="2" fill="#b7b432"/><rect x="24.0" y="24.2" width="2.3" height="2" fill="#b7b432"/><rect x="26.3" y="15.3" width="2.3" height="2" fill="#b7b432"/><rect x="26.5" y="15.0" width="2.3" height="2" fill="#3e5a2a"/><rect x="29.0" y="6.3" width="2.3" height="2" fill="#3e5a2a"/><rect x="23.4" y="15.3" width="2.3" height="2" fill="#1c1c1c"/><rect x="24.0" y="13.0" width="2.3" height="2" fill="#b7b432"/><rect x="18.9" y="27.5" width="2.3" height="2" fill="#b7b432"/><rect x="35.9" y="16.0" width="2.3" height="2" fill="#b7b432"/><rect x="22.8" y="32.4" width="2.3" height="2" fill="#b7b432"/><rect x="39.0" y="26.0" width="2.3" height="2" fill="#b7b432"/><rect x="23.3" y="12.6" width="2.3" height="2" fill="#b7b432"/><rect x="32.8" y="11.5" width="2.3" height="2" fill="#1c1c1c"/><rect x="26.2" y="11.3" width="2.3" height="2" fill="#1c1c1c"/><rect x="37.0" y="25.7" width="2.3" height="2" fill="#b7b432"/><rect x="27.1" y="9.6" width="2.3" height="2" fill="#3e5a2a"/><rect x="26.2" y="14.0" width="2.3" height="2" fill="#b7b432"/><rect x="26.7" y="18.7" width="2.3" height="2" fill="#1c1c1c"/><rect x="23.8" y="10.4" width="2.3" height="2" fill="#1c1c1c"/><rect x="37.2" y="33.2" width="2.3" height="2" fill="#b7b432"/><rect x="34.3" y="35.4" width="2.3" height="2" fill="#b7b432"/><rect x="36.9" y="29.0" width="2.3" height="2" fill="#3e5a2a"/><rect x="23.3" y="21.8" width="2.3" height="2" fill="#b7b432"/><rect x="22.4" y="12.7" width="2.3" height="2" fill="#b7b432"/><rect x="34.6" y="14.5" width="2.3" height="2" fill="#b7b432"/><rect x="31.9" y="34.0" width="2.3" height="2" fill="#1c1c1c"/><rect x="35.4" y="33.7" width="2.3" height="2" fill="#b7b432"/><rect x="29.1" y="5.9" width="2.3" height="2" fill="#b7b432"/><rect x="32.0" y="14.9" width="2.3" height="2" fill="#b7b432"/><rect x="39.6" y="18.5" width="2.3" height="2" fill="#b7b432"/><rect x="23.6" y="16.3" width="2.3" height="2" fill="#1c1c1c"/><rect x="36.2" y="20.5" width="2.3" height="2" fill="#b7b432"/><rect x="29.4" y="11.7" width="2.3" height="2" fill="#1c1c1c"/><rect x="32.2" y="10.9" width="2.3" height="2" fill="#1c1c1c"/><rect x="35.7" y="30.9" width="2.3" height="2" fill="#b7b432"/><rect x="38.6" y="25.3" width="2.3" height="2" fill="#b7b432"/><rect x="24.8" y="14.0" width="2.3" height="2" fill="#b7b432"/><rect x="28.2" y="18.8" width="2.3" height="2" fill="#3e5a2a"/><rect x="28.9" y="5.6" width="2.3" height="2" fill="#b7b432"/><rect x="25.4" y="9.4" width="2.3" height="2" fill="#1c1c1c"/><rect x="21.2" y="32.4" width="2.3" height="2" fill="#b7b432"/><rect x="25.2" y="15.5" width="2.3" height="2" fill="#b7b432"/><rect x="31.2" y="25.9" width="2.3" height="2" fill="#b7b432"/><rect x="26.7" y="11.5" width="2.3" height="2" fill="#b7b432"/><rect x="34.7" y="23.0" width="2.3" height="2" fill="#b7b432"/><rect x="27.3" y="8.0" width="2.3" height="2" fill="#b7b432"/><rect x="36.5" y="24.5" width="2.3" height="2" fill="#b7b432"/><rect x="31.5" y="30.7" width="2.3" height="2" fill="#b7b432"/><rect x="28.8" y="17.2" width="2.3" height="2" fill="#3e5a2a"/><rect x="33.7" y="18.7" width="2.3" height="2" fill="#b7b432"/><rect x="29.5" y="13.2" width="2.3" height="2" fill="#3e5a2a"/><rect x="28.6" y="7.8" width="2.3" height="2" fill="#b7b432"/><rect x="36.4" y="33.2" width="2.3" height="2" fill="#b7b432"/><rect x="33.6" y="33.8" width="2.3" height="2" fill="#b7b432"/><rect x="19.2" y="20.1" width="2.3" height="2" fill="#1c1c1c"/><rect x="39.0" y="26.4" width="2.3" height="2" fill="#3e5a2a"/><rect x="35.0" y="26.5" width="2.3" height="2" fill="#b7b432"/><rect x="29.5" y="8.7" width="2.3" height="2" fill="#b7b432"/><rect x="31.5" y="10.0" width="2.3" height="2" fill="#b7b432"/><rect x="26.5" y="8.4" width="2.3" height="2" fill="#1c1c1c"/><rect x="23.3" y="11.1" width="2.3" height="2" fill="#1c1c1c"/><rect x="31.6" y="9.3" width="2.3" height="2" fill="#3e5a2a"/><path d="M30 7V38M30 30L23 24M30 26L36 20M30 34L37 28M30 20L25 15" stroke="#c8c8c8" stroke-width="0.6" fill="none" opacity="0.8"/></svg>
<div class="a" style="left:2680px;top:238px;width:80px;height:14px;display:flex;justify-content:center;align-items:center;gap:2px"><svg  width="11.6" height="12.3" viewBox="0 0 19 21" preserveAspectRatio="none"><g clip-path="url(#pfLeft)" stroke="#cfcfcf" stroke-width="2"><path d="M-3 8.5L7 -1.5M-3 13.5L11 -0.5M-3 18.5L13 2.5M0 22L13 9M4 24L13 15"/></g><path d="M9.5 0L19 4.2L9.5 8.5L0 4.2Z" fill="#80d4fc"/><path d="M9.5 8.5L19 4.2V16.5L9.5 21Z" fill="#7bd0fa"/><path d="M0 4.2L9.5 8.5L19 4.2M9.5 8.5V21" stroke="#2a2a2a" stroke-width="0.9" fill="none"/></svg><span style="color:#c8c8c8;font-size:10.7px;line-height:14px">treeyellow</span></div>
<div class="a" style="left:2775px;top:175px;width:60px;height:60px;background:linear-gradient(#575757,#4f4f4f);box-shadow:0 0 1px #1e1e1e"></div>
<svg class="a" style="left:2775px;top:175px" width="60" height="60" viewBox="0 0 60 60"><path d="M27 8L34 6L37 12L35 22L32 34L28 38L23 33L22 22L25 14Z" fill="#d8a762"/><path d="M22 19L33 16L41 13L42 16L35 20L28 22L21 23Z" fill="#2b78b8"/><path d="M30 20L35 21L34 32L30 32Z" fill="#5a3a3a"/><path d="M30 32L34 32L34 50L31 51Z" fill="#9a5a28"/><path d="M30.5 35H34M30.5 38H34M30.5 41H34M30.5 44H34M30.5 47H34" stroke="#3a2a1a" stroke-width="1"/></svg>
<div class="a" style="left:2765px;top:238px;width:80px;height:14px;display:flex;justify-content:center;align-items:center;gap:2px"><svg  width="11.6" height="12.3" viewBox="0 0 19 21" preserveAspectRatio="none"><g clip-path="url(#pfLeft)" stroke="#cfcfcf" stroke-width="2"><path d="M-3 8.5L7 -1.5M-3 13.5L11 -0.5M-3 18.5L13 2.5M0 22L13 9M4 24L13 15"/></g><path d="M9.5 0L19 4.2L9.5 8.5L0 4.2Z" fill="#80d4fc"/><path d="M9.5 8.5L19 4.2V16.5L9.5 21Z" fill="#7bd0fa"/><path d="M0 4.2L9.5 8.5L19 4.2M9.5 8.5V21" stroke="#2a2a2a" stroke-width="0.9" fill="none"/></svg><span style="color:#c8c8c8;font-size:10.7px;line-height:14px">unitychan</span></div>
<div class="a" style="left:3116px;top:9px;width:2px;height:891px;background:#191919"></div>
<!-- ============ INSPECTOR ============ -->
<div class="a" style="left:3118px;top:9px;width:719px;height:19px;background:#282828"></div>
<div class="a" style="left:3118px;top:9px;width:93px;height:19px;background:#3c3c3c;border-radius:3px 3px 0 0"></div>
<svg class="a" style="left:3125px;top:13px" width="11" height="11" viewBox="0 0 11 11"><circle cx="5.5" cy="5.5" r="5.5" fill="#d2d2d2"/><rect x="4.7" y="4.5" width="1.6" height="4.5" fill="#3c3c3c"/><rect x="4.7" y="2" width="1.6" height="1.6" fill="#3c3c3c"/></svg>
<div class="t" style="left:3141px;top:11.7px;color:#d2d2d2">Inspector</div>
<svg class="a" style="left:3802px;top:13px" width="10" height="12" viewBox="0 0 10 12" fill="none" stroke="#d2d2d2" stroke-width="1.3"><path d="M8 5V3A3 3 0 0 0 2 3"/><rect x="1" y="5.5" width="8" height="5.5"/></svg>
<svg class="a" style="left:3822px;top:12px" width="4" height="13" viewBox="0 0 4 13" fill="#d2d2d2"><circle cx="2" cy="2" r="1.4"/><circle cx="2" cy="6.5" r="1.4"/><circle cx="2" cy="11" r="1.4"/></svg>
<div class="a" style="left:3118px;top:28px;width:719px;height:110px;background:#3e3e3e"></div>
<div class="a" style="left:3118px;top:137px;width:719px;height:2px;background:#242424"></div>
<div class="a" style="left:3118px;top:139px;width:719px;height:20px;background:#3e3e3e"></div>
<div class="a" style="left:3118px;top:159px;width:719px;height:1px;background:#2f2f2f"></div>
<div class="a" style="left:3118px;top:160px;width:719px;height:740px;background:#383838"></div>
<div class="a" style="left:3118px;top:230px;width:719px;height:2px;background:#242424"></div>

<svg class="a" style="left:3126px;top:38.7px" width="19" height="20.7" viewBox="0 0 19 21" preserveAspectRatio="none"><g clip-path="url(#pfLeft)" stroke="#cfcfcf" stroke-width="2"><path d="M-3 8.5L7 -1.5M-3 13.5L11 -0.5M-3 18.5L13 2.5M0 22L13 9M4 24L13 15"/></g><path d="M9.5 0L19 4.2L9.5 8.5L0 4.2Z" fill="#80d4fc"/><path d="M9.5 8.5L19 4.2V16.5L9.5 21Z" fill="#7bd0fa"/><path d="M0 4.2L9.5 8.5L19 4.2M9.5 8.5V21" stroke="#2a2a2a" stroke-width="0.9" fill="none"/></svg>
<div class="dd" style="left:3144px;top:59px;border-top-width:4px"></div>
<div class="a" style="left:3165.5px;top:39px;width:13.5px;height:14px;background:#2a2a2a;border:1px solid #1f1f1f;border-radius:2px"></div>
<svg class="a" style="left:3167.5px;top:42px" width="10" height="8" viewBox="0 0 10 8" stroke="#e8e8e8" stroke-width="1.6" fill="none"><path d="M1 4L3.7 6.7L9 1"/></svg>
<div class="a" style="left:3185px;top:37px;width:573px;height:18px;background:#2a2a2a;border:1px solid #212121;border-radius:3px"></div>
<div class="t" style="left:3188.5px;top:39.2px;color:#e0e0e0;">house</div>
<div class="a" style="left:3761.5px;top:39px;width:13.5px;height:14px;background:#2a2a2a;border:1px solid #1f1f1f;border-radius:2px"></div>
<div class="t" style="left:3779.5px;top:38.7px;color:#c4c4c4;">Static</div>
<div class="dd" style="left:3824px;top:44.5px"></div>
<div class="t" style="left:3158.7px;top:61.9px;color:#c4c4c4;">Tag</div>
<div class="btn" style="left:3185px;top:62px;width:303px;height:16.5px;background:#515151;border:1px solid #2e2e2e"></div>
<div class="t" style="left:3188.5px;top:61.7px;color:#d2d2d2;">Untagged</div>
<div class="dd" style="left:3476px;top:68px"></div>
<div class="t" style="left:3503.5px;top:62.4px;color:#c4c4c4;">Layer</div>
<div class="btn" style="left:3539px;top:62px;width:294px;height:16.5px;background:#515151;border:1px solid #2e2e2e"></div>
<div class="t" style="left:3542.5px;top:61.7px;color:#d2d2d2;">Default</div>
<div class="dd" style="left:3820.5px;top:68px"></div>
<div class="t" style="left:3142.8px;top:95.0px;color:#c4c4c4;">Prefab</div>
<div class="a" style="left:3185px;top:93.5px;width:648px;height:17px;background:#2a2a2a;border:1px solid #212121;border-radius:3px"></div>
<div class="a" style="left:3815px;top:94.5px;width:17px;height:15px;background:#2f2f2f;border-radius:0 2px 2px 0"></div>
<svg class="a" style="left:3819px;top:97px" width="10" height="10" viewBox="0 0 10 10"><circle cx="5" cy="5" r="4.3" fill="none" stroke="#d0d0d0" stroke-width="1.1"/><circle cx="5" cy="5" r="1.8" fill="#d0d0d0"/></svg>
<svg class="a" style="left:3187.5px;top:96.5px" width="10" height="11" viewBox="0 0 19 21" preserveAspectRatio="none"><g clip-path="url(#pfLeft)" stroke="#cfcfcf" stroke-width="2"><path d="M-3 8.5L7 -1.5M-3 13.5L11 -0.5M-3 18.5L13 2.5M0 22L13 9M4 24L13 15"/></g><path d="M9.5 0L19 4.2L9.5 8.5L0 4.2Z" fill="#80d4fc"/><path d="M9.5 8.5L19 4.2V16.5L9.5 21Z" fill="#7bd0fa"/><path d="M0 4.2L9.5 8.5L19 4.2M9.5 8.5V21" stroke="#2a2a2a" stroke-width="0.9" fill="none"/></svg>
<div class="t" style="left:3200.5px;top:95.0px;color:#d2d2d2;">house</div>
<div class="btn" style="left:3185px;top:115.5px;width:221px;height:16.5px;background:#515151;border:1px solid #2e2e2e"></div>
<div class="t" style="left:3188.5px;top:116.3px;color:#d2d2d2;">Overrides</div>
<div class="dd" style="left:3393px;top:121.5px"></div>
<div class="btn" style="left:3440px;top:114px;width:197px;height:16.5px;background:#585858;border:1px solid #2e2e2e"></div>
<div class="t" style="left:3440px;top:114.2px;width:197px;text-align:center;color:#d2d2d2">Select</div>
<div class="btn" style="left:3640px;top:114px;width:191.5px;height:16.5px;background:#585858;border:1px solid #2e2e2e"></div>
<div class="t" style="left:3640px;top:114.2px;width:191.5px;text-align:center;color:#d2d2d2">Open</div>
<svg class="a" style="left:3124.5px;top:146px" width="9" height="8" viewBox="0 0 9 8" fill="#8a8a8a"><path d="M0 0H9L4.5 8Z"/></svg>
<svg class="a" style="left:3139px;top:142.5px" width="14" height="12" viewBox="0 0 14 12" stroke-width="2" stroke-linecap="round"><path d="M7 6.5V1" stroke="#8ed84a"/><path d="M7 6.5L1.5 10" stroke="#52b8f0"/><path d="M7 6.5L12.5 10" stroke="#f0743a"/></svg>
<div class="t" style="left:3178.8px;top:142.0px;color:#d2d2d2;font-weight:bold">Transform</div>
<svg class="a" style="left:3780px;top:144px" width="11" height="11" viewBox="0 0 11 11"><circle cx="5.5" cy="5.5" r="5.3" fill="#d0d0d0"/><path d="M3.6 4.2A1.9 1.9 0 1 1 5.5 6.1V7" stroke="#3e3e3e" stroke-width="1.4" fill="none"/><rect x="4.8" y="7.8" width="1.4" height="1.4" fill="#3e3e3e"/></svg>
<svg class="a" style="left:3799.5px;top:144px" width="11" height="11" viewBox="0 0 11 11" stroke="#d0d0d0" stroke-width="1.3"><path d="M0 3H11M0 8H11M7 0.5V5.5M4 5.5V10.5"/></svg>
<svg class="a" style="left:3823px;top:143px" width="4" height="13" viewBox="0 0 4 13" fill="#d2d2d2"><circle cx="2" cy="2" r="1.4"/><circle cx="2" cy="6.5" r="1.4"/><circle cx="2" cy="11" r="1.4"/></svg>
<div class="t" style="left:3137px;top:165.7px;color:#d2d2d2;font-weight:bold">Position</div>
<div class="t" style="left:3423.6px;top:165.7px;color:#c4c4c4;">X</div>
<div class="a" style="left:3438px;top:164px;width:118.5px;height:17.5px;background:#2a2a2a;border:1px solid #212121;border-radius:3px"></div>
<div class="t" style="left:3441.3px;top:165.7px;color:#d2d2d2;">28.18</div>
<div class="t" style="left:3563px;top:165.7px;color:#c4c4c4;">Y</div>
<div class="a" style="left:3577px;top:164px;width:118.5px;height:17.5px;background:#2a2a2a;border:1px solid #212121;border-radius:3px"></div>
<div class="t" style="left:3580.3px;top:165.7px;color:#d2d2d2;">0.0001</div>
<div class="t" style="left:3703px;top:165.7px;color:#c4c4c4;">Z</div>
<div class="a" style="left:3715px;top:164px;width:118.5px;height:17.5px;background:#2a2a2a;border:1px solid #212121;border-radius:3px"></div>
<div class="t" style="left:3718.3px;top:165.7px;color:#d2d2d2;">9.35</div>
<div class="t" style="left:3137px;top:186.0px;color:#d2d2d2;font-weight:bold">Rotation</div>
<div class="t" style="left:3423.6px;top:186.0px;color:#c4c4c4;">X</div>
<div class="a" style="left:3438px;top:184px;width:118.5px;height:17.5px;background:#2a2a2a;border:1px solid #212121;border-radius:3px"></div>
<div class="t" style="left:3441.3px;top:186.0px;color:#d2d2d2;">0</div>
<div class="t" style="left:3563px;top:186.0px;color:#c4c4c4;">Y</div>
<div class="a" style="left:3577px;top:184px;width:118.5px;height:17.5px;background:#2a2a2a;border:1px solid #212121;border-radius:3px"></div>
<div class="t" style="left:3580.3px;top:186.0px;color:#d2d2d2;">0</div>
<div class="t" style="left:3703px;top:186.0px;color:#c4c4c4;">Z</div>
<div class="a" style="left:3715px;top:184px;width:118.5px;height:17.5px;background:#2a2a2a;border:1px solid #212121;border-radius:3px"></div>
<div class="t" style="left:3718.3px;top:186.0px;color:#d2d2d2;">0</div>
<div class="t" style="left:3137px;top:205.7px;color:#c4c4c4;">Scale</div>
<div class="t" style="left:3423.6px;top:205.7px;color:#c4c4c4;">X</div>
<div class="a" style="left:3438px;top:204.3px;width:118.5px;height:17.5px;background:#2a2a2a;border:1px solid #212121;border-radius:3px"></div>
<div class="t" style="left:3441.3px;top:205.7px;color:#d2d2d2;">1</div>
<div class="t" style="left:3563px;top:205.7px;color:#c4c4c4;">Y</div>
<div class="a" style="left:3577px;top:204.3px;width:118.5px;height:17.5px;background:#2a2a2a;border:1px solid #212121;border-radius:3px"></div>
<div class="t" style="left:3580.3px;top:205.7px;color:#d2d2d2;">1</div>
<div class="t" style="left:3703px;top:205.7px;color:#c4c4c4;">Z</div>
<div class="a" style="left:3715px;top:204.3px;width:118.5px;height:17.5px;background:#2a2a2a;border:1px solid #212121;border-radius:3px"></div>
<div class="t" style="left:3718.3px;top:205.7px;color:#d2d2d2;">1</div>
<svg class="a" style="left:3401px;top:208px" width="13" height="10" viewBox="0 0 13 10" fill="none" stroke="#c0c0c0" stroke-width="1.1"><path d="M4 1.5H3A3 3 0 0 0 3 8.5H5M9 1.5H10A3 3 0 0 1 10 8.5H8M4 5H9"/><path d="M1 0.5L12 9.5"/></svg>
<div class="btn" style="left:3364px;top:240.5px;width:228px;height:22.5px;background:#585858;border:1px solid #2e2e2e"></div>
<div class="t" style="left:3364px;top:243.5px;width:228px;text-align:center;color:#d2d2d2">Add Component</div>
</body></html>
